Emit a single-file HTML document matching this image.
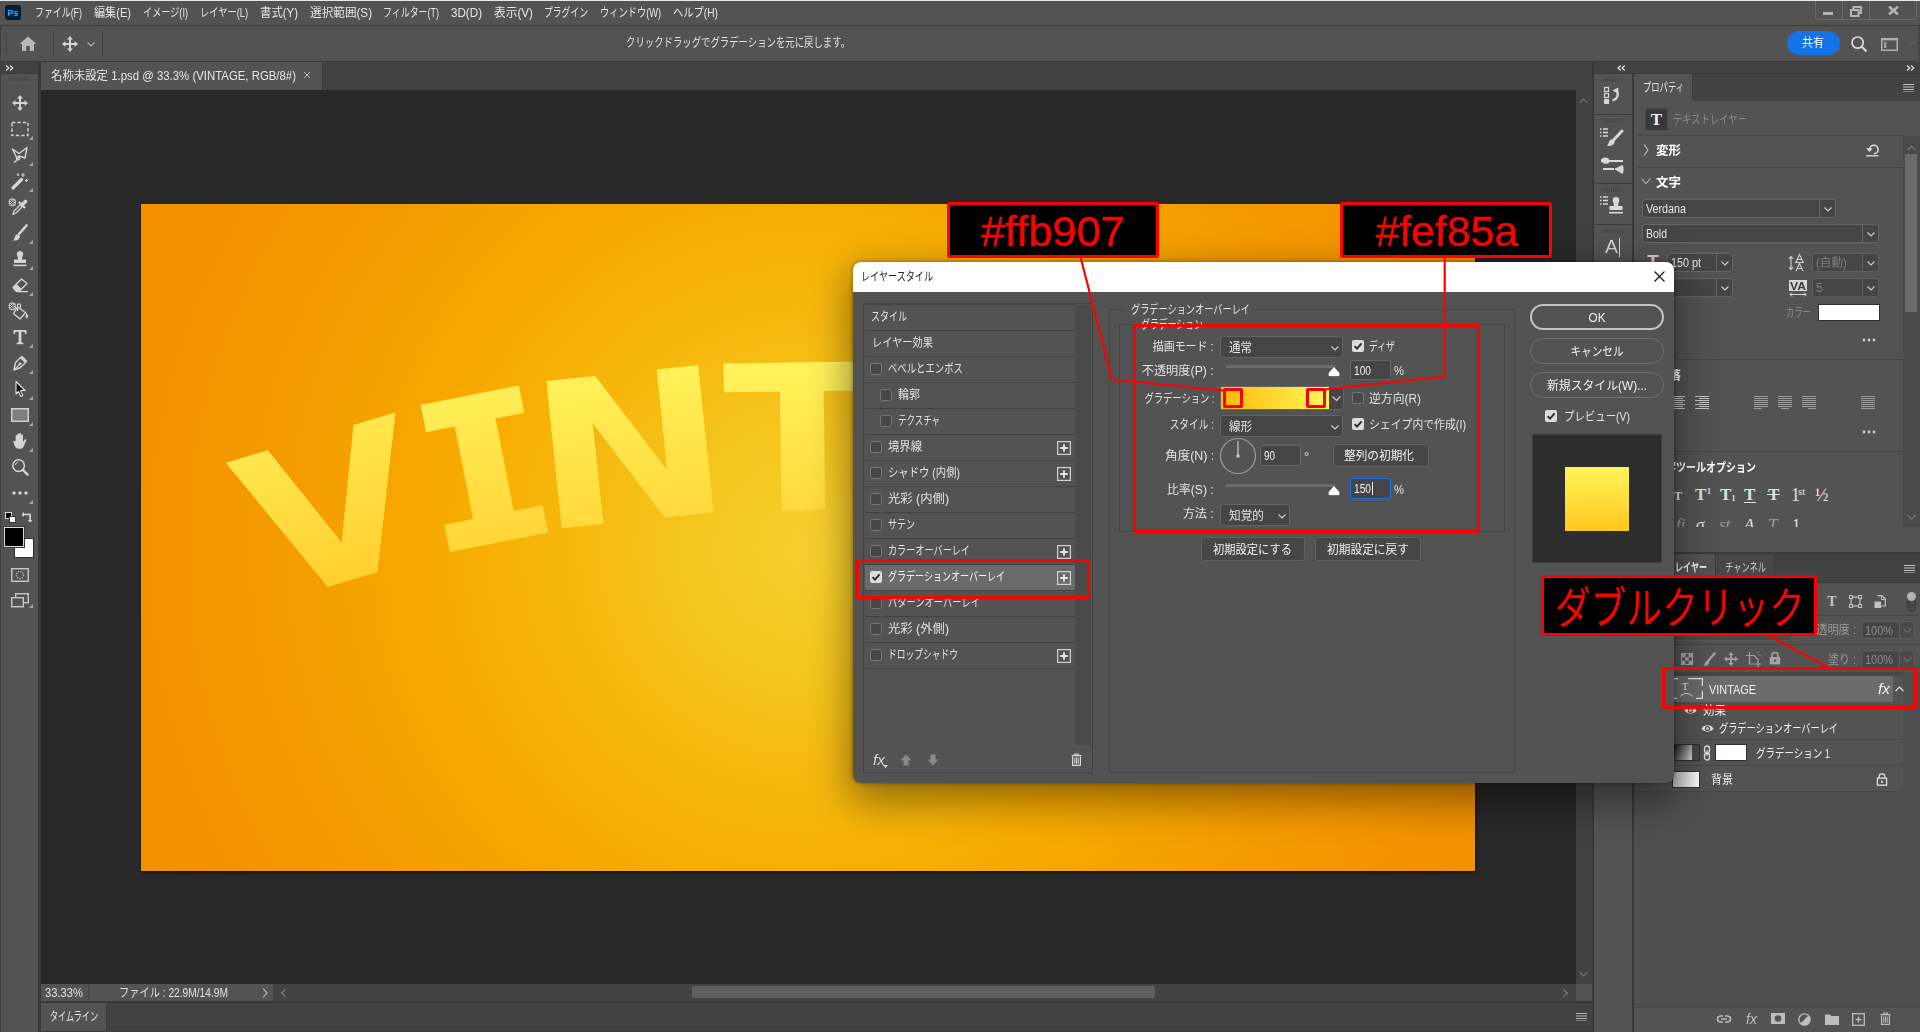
<!DOCTYPE html>
<html lang="ja"><head><meta charset="utf-8"><title>Photoshop</title>
<style>
html,body{margin:0;padding:0;}
body{width:1920px;height:1032px;overflow:hidden;background:#535353;position:relative;font-family:"Liberation Sans","Noto Sans CJK JP",sans-serif;font-size:12px;color:#ddd;}
.b{position:absolute;box-sizing:border-box;display:block;}
.t{position:absolute;white-space:nowrap;display:block;}
.t i{font-style:normal;}
</style></head>
<body>
<div class="b" style="left:0px;top:0px;width:1920px;height:26px;background:#535353;"></div>
<div class="b" style="left:0px;top:0px;width:1920px;height:1px;background:#e8e8e8;"></div>
<div class="b" style="left:0px;top:25px;width:1920px;height:1px;background:#3a3a3a;"></div>
<div class="b" style="left:5px;top:5px;width:16px;height:15px;background:#001e36;border-radius:3px;"></div>
<span class="t" id="t1" style="top:0.5px;height:24px;line-height:24px;font-size:9px;color:#31a8ff;font-weight:700;left:7.5px;transform-origin:0 50%;">Ps</span>
<span class="t" id="t2" style="top:0.5px;height:24px;line-height:24px;font-size:12px;color:#e6e6e6;left:35px;transform-origin:0 50%;transform:scaleX(0.7422);">ファイル(F)</span>
<span class="t" id="t3" style="top:0.5px;height:24px;line-height:24px;font-size:12px;color:#e6e6e6;left:94px;transform-origin:0 50%;transform:scaleX(0.9250);">編集(E)</span>
<span class="t" id="t4" style="top:0.5px;height:24px;line-height:24px;font-size:12px;color:#e6e6e6;left:143px;transform-origin:0 50%;transform:scaleX(0.7615);">イメージ(I)</span>
<span class="t" id="t5" style="top:0.5px;height:24px;line-height:24px;font-size:12px;color:#e6e6e6;left:200px;transform-origin:0 50%;transform:scaleX(0.7703);">レイヤー(L)</span>
<span class="t" id="t6" style="top:0.5px;height:24px;line-height:24px;font-size:12px;color:#e6e6e6;left:260px;transform-origin:0 50%;transform:scaleX(0.9500);">書式(Y)</span>
<span class="t" id="t7" style="top:0.5px;height:24px;line-height:24px;font-size:12px;color:#e6e6e6;left:310px;transform-origin:0 50%;transform:scaleX(0.9688);">選択範囲(S)</span>
<span class="t" id="t8" style="top:0.5px;height:24px;line-height:24px;font-size:12px;color:#e6e6e6;left:383px;transform-origin:0 50%;transform:scaleX(0.7457);">フィルター(T)</span>
<span class="t" id="t9" style="top:0.5px;height:24px;line-height:24px;font-size:12px;color:#e6e6e6;left:451px;transform-origin:0 50%;transform:scaleX(0.9688);">3D(D)</span>
<span class="t" id="t10" style="top:0.5px;height:24px;line-height:24px;font-size:12px;color:#e6e6e6;left:494px;transform-origin:0 50%;transform:scaleX(0.9750);">表示(V)</span>
<span class="t" id="t11" style="top:0.5px;height:24px;line-height:24px;font-size:12px;color:#e6e6e6;left:544px;transform-origin:0 50%;transform:scaleX(0.7331);">プラグイン</span>
<span class="t" id="t12" style="top:0.5px;height:24px;line-height:24px;font-size:12px;color:#e6e6e6;left:600px;transform-origin:0 50%;transform:scaleX(0.7690);">ウィンドウ(W)</span>
<span class="t" id="t13" style="top:0.5px;height:24px;line-height:24px;font-size:12px;color:#e6e6e6;left:673px;transform-origin:0 50%;transform:scaleX(0.8543);">ヘルプ(H)</span>
<div class="b" style="left:1815px;top:1px;width:102px;height:19px;border:1px solid #6a6a6a;border-top:none;border-radius:0 0 4px 4px;"></div>
<div class="b" style="left:1842px;top:1px;width:1px;height:18px;background:#6a6a6a;"></div>
<div class="b" style="left:1869px;top:1px;width:1px;height:18px;background:#6a6a6a;"></div>
<div class="b" style="left:1823px;top:12px;width:10px;height:3px;background:#b4b4b4;"></div>
<svg class="b" style="left:1850px;top:6px;" width="12" height="11" viewBox="0 0 12 11"><rect x="3.5" y="1" width="7.5" height="6" fill="none" stroke="#b4b4b4" stroke-width="2"/><rect x="1" y="4" width="7.5" height="6" fill="#535353" stroke="#b4b4b4" stroke-width="2"/></svg>
<svg class="b" style="left:1888px;top:6px;" width="11" height="9" viewBox="0 0 11 9"><path d="M1 0.5 L10 8.5 M10 0.5 L1 8.5" stroke="#b4b4b4" stroke-width="2.6"/></svg>
<div class="b" style="left:0px;top:26px;width:1920px;height:36px;background:#535353;"></div>
<div class="b" style="left:0px;top:61px;width:1920px;height:1px;background:#3a3a3a;"></div>
<div class="b" style="left:0px;top:26px;width:1px;height:36px;background:#3f3f3f;"></div>
<div class="b" style="left:1918px;top:26px;width:2px;height:36px;background:#464646;"></div>
<div class="b" style="left:5px;top:34px;width:2px;height:19px;background:repeating-linear-gradient(#454545 0 1px,#535353 1px 2px);"></div>
<svg class="b" style="left:19px;top:36px;" width="18" height="16" viewBox="0 0 18 16"><path d="M9 0.5 L0.5 8 H3 V15 H7.2 V10 H10.8 V15 H15 V8 H17.5 Z" fill="#b9b9b9"/></svg>
<div class="b" style="left:53px;top:31px;width:1px;height:25px;background:#424242;"></div>
<div class="b" style="left:102px;top:31px;width:1px;height:25px;background:#424242;"></div>
<svg class="b" style="left:62px;top:36px;" width="16" height="16" viewBox="0 0 16 16"><path d="M8 0 L11 3.4 H9 V7 H12.6 V5 L16 8 L12.6 11 V9 H9 V12.6 H11 L8 16 L5 12.6 H7 V9 H3.4 V11 L0 8 L3.4 5 V7 H7 V3.4 H5 Z" fill="#d6d6d6"/></svg>
<svg class="b" style="left:87px;top:42px;" width="8" height="5" viewBox="0 0 8 5"><path d="M0.5 0.5 L4 4 L7.5 0.5" fill="none" stroke="#b0b0b0" stroke-width="1.2"/></svg>
<span class="t" id="t14" style="top:31px;height:24px;line-height:24px;font-size:12px;color:#e0e0e0;left:626px;transform-origin:0 50%;transform:scaleX(0.7817);">クリックドラッグでグラデーションを元に戻します。</span>
<div class="b" style="left:1787px;top:31px;width:53px;height:24px;background:#1473e6;border-radius:12px;"></div>
<span class="t" id="t15" style="top:31px;height:24px;line-height:24px;font-size:12px;color:#ffffff;left:1802px;transform-origin:0 50%;transform:scaleX(0.9161);">共有</span>
<svg class="b" style="left:1850px;top:35px;" width="18" height="18" viewBox="0 0 18 18"><circle cx="7.6" cy="7.6" r="5.6" fill="none" stroke="#dcdcdc" stroke-width="1.7"/><path d="M11.8 11.8 L16.5 16.5" stroke="#dcdcdc" stroke-width="2.2"/></svg>
<svg class="b" style="left:1881px;top:38px;" width="17" height="13" viewBox="0 0 17 13"><rect x="0.75" y="0.75" width="15.5" height="11.5" fill="none" stroke="#b0b0b0" stroke-width="1.5"/><rect x="0.75" y="0.75" width="15.5" height="1.6" fill="#b0b0b0"/><rect x="3" y="4" width="2.4" height="6" fill="#a0a0a0"/></svg>
<svg class="b" style="left:1906px;top:41px;" width="9" height="5" viewBox="0 0 9 5"><path d="M0.5 0.5 L4.5 4 L8.5 0.5" fill="none" stroke="#626262" stroke-width="1.2"/></svg>
<div class="b" style="left:0px;top:62px;width:38px;height:970px;background:#535353;"></div>
<div class="b" style="left:0px;top:62px;width:38px;height:12px;background:#424242;"></div>
<div class="b" style="left:0px;top:73px;width:38px;height:1px;background:#3a3a3a;"></div>
<div class="b" style="left:38px;top:62px;width:3px;height:970px;background:#383838;"></div>
<div class="b" style="left:0px;top:62px;width:1px;height:970px;background:#3f3f3f;"></div>
<svg class="b" style="left:5px;top:65px;" width="9" height="6" viewBox="0 0 9 6"><path d="M1 0.5 L3.8 3 L1 5.5 M5 0.5 L7.8 3 L5 5.5" fill="none" stroke="#e0e0e0" stroke-width="1.2"/></svg>
<div class="b" style="left:10px;top:77px;width:19px;height:4px;background:repeating-linear-gradient(90deg,#464646 0 1px,#535353 1px 2px);"></div>
<svg class="b" style="left:10px;top:93px;overflow:visible;" width="20" height="20" viewBox="0 0 20 20"><g transform="translate(2,2)"><path d="M8 0 L11 3.4 H9 V7 H12.6 V5 L16 8 L12.6 11 V9 H9 V12.6 H11 L8 16 L5 12.6 H7 V9 H3.4 V11 L0 8 L3.4 5 V7 H7 V3.4 H5 Z" fill="#d4d4d4"/></g></svg>
<svg class="b" style="left:10px;top:119px;overflow:visible;" width="20" height="20" viewBox="0 0 20 20"><rect x="2" y="3.5" width="16" height="13" fill="none" stroke="#d4d4d4" stroke-width="1.4" stroke-dasharray="3.4 2"/></svg>
<svg class="b" style="left:29px;top:136px;" width="4" height="4" viewBox="0 0 4 4"><path d="M4 0 V4 H0 Z" fill="#a8a8a8"/></svg>
<svg class="b" style="left:10px;top:145px;overflow:visible;" width="20" height="20" viewBox="0 0 20 20"><path d="M2.5 4 L9 8.5 L17 2.5 L15 13 L9.5 11 L7.5 14.5 Z" fill="none" stroke="#d4d4d4" stroke-width="1.4" stroke-linejoin="round"/><path d="M7.5 14.5 L4 17.5" stroke="#d4d4d4" stroke-width="1.4"/><circle cx="8.2" cy="13.2" r="1.8" fill="none" stroke="#d4d4d4" stroke-width="1.1"/></svg>
<svg class="b" style="left:29px;top:162px;" width="4" height="4" viewBox="0 0 4 4"><path d="M4 0 V4 H0 Z" fill="#a8a8a8"/></svg>
<svg class="b" style="left:10px;top:171px;overflow:visible;" width="20" height="20" viewBox="0 0 20 20"><path d="M3 17 L11.5 8.5" stroke="#d4d4d4" stroke-width="3.2" stroke-linecap="round"/><path d="M13 2 V6 M11 4 H15 M16.5 8 V11 M15 9.5 H18 M8 2.5 V5 M6.8 3.7 H9.2" stroke="#d4d4d4" stroke-width="1.1"/></svg>
<svg class="b" style="left:29px;top:188px;" width="4" height="4" viewBox="0 0 4 4"><path d="M4 0 V4 H0 Z" fill="#a8a8a8"/></svg>
<svg class="b" style="left:10px;top:197px;overflow:visible;" width="20" height="20" viewBox="0 0 20 20"><path d="M3 17.5 L4 14 L10.5 7.5 L12.5 9.5 L6 16 Z" fill="none" stroke="#d4d4d4" stroke-width="1.3" stroke-linejoin="round"/><path d="M9.5 5.5 L14.5 10.5" stroke="#d4d4d4" stroke-width="2.2" stroke-linecap="round"/><path d="M12 8 L15.5 4.5" stroke="#d4d4d4" stroke-width="3.6" stroke-linecap="round"/><g transform="translate(-1.2,1.6)"><rect x="0" y="0" width="7" height="7.6" rx="2.6" fill="#d4d4d4"/><g fill="#3c3c3c"><rect x="1" y="1" width="1.2" height="1.2"/><rect x="3.4" y="1" width="1.2" height="1.2"/><rect x="2.2" y="2.2" width="1.2" height="1.2"/><rect x="4.6" y="2.2" width="1.2" height="1.2"/><rect x="1" y="3.4" width="1.2" height="1.2"/><rect x="3.4" y="3.4" width="1.2" height="1.2"/><rect x="2.2" y="4.6" width="1.2" height="1.2"/><rect x="4.6" y="4.6" width="1.2" height="1.2"/><rect x="1" y="5.8" width="1.2" height="1"/><rect x="3.4" y="5.8" width="1.2" height="1"/></g></g></svg>
<svg class="b" style="left:10px;top:223px;overflow:visible;" width="20" height="20" viewBox="0 0 20 20"><path d="M16.5 2.5 L9 11" stroke="#d4d4d4" stroke-width="2.6" stroke-linecap="round"/><path d="M7.8 11.2 C5.5 11.2 4.8 13.5 4.6 15 C4.4 16.3 3.4 17 2.5 17.2 C5.5 18.3 9.6 17 10 13.4 Z" fill="#d4d4d4"/></svg>
<svg class="b" style="left:29px;top:240px;" width="4" height="4" viewBox="0 0 4 4"><path d="M4 0 V4 H0 Z" fill="#a8a8a8"/></svg>
<svg class="b" style="left:10px;top:249px;overflow:visible;" width="20" height="20" viewBox="0 0 20 20"><path d="M10 2 C12.2 2 13.4 3.6 13.2 5.4 C13 7 12 8 12 9.5 V10.5 H16 V14 H4 V10.5 H8 V9.5 C8 8 7 7 6.8 5.4 C6.6 3.6 7.8 2 10 2 Z" fill="#d4d4d4"/><rect x="3.5" y="15.6" width="13" height="1.6" fill="#d4d4d4"/></svg>
<svg class="b" style="left:29px;top:266px;" width="4" height="4" viewBox="0 0 4 4"><path d="M4 0 V4 H0 Z" fill="#a8a8a8"/></svg>
<svg class="b" style="left:10px;top:275px;overflow:visible;" width="20" height="20" viewBox="0 0 20 20"><path d="M3 12.5 L11.5 4 L17 8.5 L9 16.5 H6.5 Z" fill="none" stroke="#d4d4d4" stroke-width="1.4" stroke-linejoin="round"/><path d="M3 12.5 L6.5 16.5 H9 L11.5 14 L6.5 9 Z" fill="#d4d4d4"/><path d="M9 16.6 H18" stroke="#d4d4d4" stroke-width="1.3"/></svg>
<svg class="b" style="left:29px;top:292px;" width="4" height="4" viewBox="0 0 4 4"><path d="M4 0 V4 H0 Z" fill="#a8a8a8"/></svg>
<svg class="b" style="left:10px;top:301px;overflow:visible;" width="20" height="20" viewBox="0 0 20 20"><path d="M7.5 6 L15.5 11.5 L10 18 L3.5 12.5 Z" fill="none" stroke="#d4d4d4" stroke-width="1.4" stroke-linejoin="round"/><path d="M7.5 10 V4 C7.5 2.4 10.5 2.4 10.5 4 V7.5" fill="none" stroke="#d4d4d4" stroke-width="1.2"/><path d="M16 11.5 C17.8 13.5 18.2 15 17.8 16.6 C17.3 18 15.6 17.6 15.6 16 Z" fill="#d4d4d4"/><g transform="translate(-1.2,1.6)"><rect x="0" y="0" width="7" height="7.6" rx="2.6" fill="#d4d4d4"/><g fill="#3c3c3c"><rect x="1" y="1" width="1.2" height="1.2"/><rect x="3.4" y="1" width="1.2" height="1.2"/><rect x="2.2" y="2.2" width="1.2" height="1.2"/><rect x="4.6" y="2.2" width="1.2" height="1.2"/><rect x="1" y="3.4" width="1.2" height="1.2"/><rect x="3.4" y="3.4" width="1.2" height="1.2"/><rect x="2.2" y="4.6" width="1.2" height="1.2"/><rect x="4.6" y="4.6" width="1.2" height="1.2"/><rect x="1" y="5.8" width="1.2" height="1"/><rect x="3.4" y="5.8" width="1.2" height="1"/></g></g></svg>
<svg class="b" style="left:10px;top:327px;overflow:visible;" width="20" height="20" viewBox="0 0 20 20"><path d="M3.5 3 H16.5 V7 H15.2 C15 5.4 14.4 4.8 13 4.8 H11.4 V14.6 C11.4 15.6 11.9 15.9 13.4 16 V17.2 H6.6 V16 C8.1 15.9 8.6 15.6 8.6 14.6 V4.8 H7 C5.6 4.8 5 5.4 4.8 7 H3.5 Z" fill="#d4d4d4"/></svg>
<svg class="b" style="left:29px;top:344px;" width="4" height="4" viewBox="0 0 4 4"><path d="M4 0 V4 H0 Z" fill="#a8a8a8"/></svg>
<svg class="b" style="left:10px;top:353px;overflow:visible;" width="20" height="20" viewBox="0 0 20 20"><path d="M4 17 L5.5 9.5 L10.5 4.5 L15.5 9.5 L10.5 14.5 Z" fill="none" stroke="#d4d4d4" stroke-width="1.4" stroke-linejoin="round"/><path d="M4 17 L9.5 11.5" stroke="#d4d4d4" stroke-width="1.1"/><circle cx="10" cy="10.8" r="1.4" fill="#d4d4d4"/><path d="M11 3.5 L16.5 9" stroke="#d4d4d4" stroke-width="2.6"/></svg>
<svg class="b" style="left:29px;top:370px;" width="4" height="4" viewBox="0 0 4 4"><path d="M4 0 V4 H0 Z" fill="#a8a8a8"/></svg>
<svg class="b" style="left:10px;top:379px;overflow:visible;" width="20" height="20" viewBox="0 0 20 20"><path d="M6 2.5 L15 11.5 H10.5 L12.8 16.5 L10.8 17.4 L8.5 12.4 L6 15 Z" fill="#0a0a0a" stroke="#e6e6e6" stroke-width="1.1" stroke-linejoin="round"/></svg>
<svg class="b" style="left:29px;top:396px;" width="4" height="4" viewBox="0 0 4 4"><path d="M4 0 V4 H0 Z" fill="#a8a8a8"/></svg>
<svg class="b" style="left:10px;top:405px;overflow:visible;" width="20" height="20" viewBox="0 0 20 20"><rect x="1.7" y="3.7" width="16.6" height="12.6" fill="#808080" stroke="#d4d4d4" stroke-width="1.4"/></svg>
<svg class="b" style="left:29px;top:422px;" width="4" height="4" viewBox="0 0 4 4"><path d="M4 0 V4 H0 Z" fill="#a8a8a8"/></svg>
<svg class="b" style="left:10px;top:431px;overflow:visible;" width="20" height="20" viewBox="0 0 20 20"><path d="M5.6 10.5 V5 C5.6 3.8 7.4 3.8 7.4 5 V9 V3.4 C7.4 2.2 9.3 2.2 9.3 3.4 V9 V3 C9.3 1.8 11.2 1.8 11.2 3 V9 V4.4 C11.2 3.2 13 3.2 13 4.4 V11 L14.6 8.6 C15.4 7.6 16.9 8.4 16.3 9.6 L13.6 15.4 C12.9 17 11.8 17.8 10 17.8 H8.8 C6.4 17.8 5.2 16.6 4.6 14.6 L3.4 11 C3 9.8 4.6 9.2 5.2 10.3 Z" fill="#d4d4d4"/></svg>
<svg class="b" style="left:29px;top:448px;" width="4" height="4" viewBox="0 0 4 4"><path d="M4 0 V4 H0 Z" fill="#a8a8a8"/></svg>
<svg class="b" style="left:10px;top:457px;overflow:visible;" width="20" height="20" viewBox="0 0 20 20"><circle cx="8.6" cy="8.6" r="5.8" fill="none" stroke="#d4d4d4" stroke-width="1.5"/><path d="M12.8 12.8 L17.6 17.6" stroke="#d4d4d4" stroke-width="2.4" stroke-linecap="round"/><path d="M5.4 8 C5.6 6.4 6.6 5.5 8 5.3" fill="none" stroke="#d4d4d4" stroke-width="1"/></svg>
<svg class="b" style="left:10px;top:483px;overflow:visible;" width="20" height="20" viewBox="0 0 20 20"><circle cx="4" cy="10" r="1.7" fill="#d4d4d4"/><circle cx="10" cy="10" r="1.7" fill="#d4d4d4"/><circle cx="16" cy="10" r="1.7" fill="#d4d4d4"/></svg>
<svg class="b" style="left:29px;top:500px;" width="4" height="4" viewBox="0 0 4 4"><path d="M4 0 V4 H0 Z" fill="#a8a8a8"/></svg>
<div class="b" style="left:5px;top:512px;width:7px;height:7px;background:#000;border:1px solid #d8d8d8;"></div>
<div class="b" style="left:9px;top:516px;width:7px;height:7px;background:#fff;border:1px solid #3a3a3a;"></div>
<svg class="b" style="left:21px;top:511px;" width="13" height="12" viewBox="0 0 13 12"><path d="M3 1 L0.5 3.5 L3 6 V4.3 H8.3 V9 H6.6 L9.1 11.5 L11.6 9 H9.9 V2.7 H3 Z" fill="#d8d8d8"/></svg>
<div class="b" style="left:14px;top:538px;width:20px;height:20px;background:#fff;border:1px solid #2c2c2c;"></div>
<div class="b" style="left:4px;top:527px;width:20px;height:20px;background:#000;border:1px solid #dcdcdc;box-shadow:0 0 0 1px #3a3a3a;"></div>
<svg class="b" style="left:11px;top:568px;" width="18" height="14" viewBox="0 0 18 14"><rect x="0.7" y="0.7" width="16.6" height="12.6" fill="none" stroke="#c8c8c8" stroke-width="1.4"/><circle cx="9" cy="7" r="3.6" fill="none" stroke="#c8c8c8" stroke-width="1.2" stroke-dasharray="1.2 1.2"/></svg>
<svg class="b" style="left:11px;top:593px;" width="18" height="15" viewBox="0 0 18 15"><rect x="4.7" y="0.7" width="12.6" height="9" fill="none" stroke="#c8c8c8" stroke-width="1.4"/><rect x="0.7" y="4.7" width="11.6" height="9" fill="#535353" stroke="#c8c8c8" stroke-width="1.4"/></svg>
<svg class="b" style="left:29px;top:604px;" width="4" height="4" viewBox="0 0 4 4"><path d="M4 0 V4 H0 Z" fill="#a8a8a8"/></svg>
<div class="b" style="left:41px;top:62px;width:1551px;height:28px;background:#424242;"></div>
<div class="b" style="left:41px;top:62px;width:281px;height:28px;background:#535353;"></div>
<div class="b" style="left:322px;top:62px;width:1px;height:28px;background:#3a3a3a;"></div>
<span class="t" id="t16" style="top:63.5px;height:24px;line-height:24px;font-size:12px;color:#e6e6e6;left:51px;transform-origin:0 50%;transform:scaleX(0.9495);">名称未設定 1.psd @ 33.3% (VINTAGE, RGB/8#)</span>
<svg class="b" style="left:303px;top:71px;" width="8" height="8" viewBox="0 0 8 8"><path d="M1 1 L7 7 M7 1 L1 7" stroke="#b8b8b8" stroke-width="1"/></svg>
<div class="b" style="left:41px;top:90px;width:1535px;height:894px;background:#282828;"></div>
<div class="b" style="left:1576px;top:90px;width:16px;height:894px;background:#424242;"></div>
<svg class="b" style="left:1579px;top:98px;" width="9" height="6" viewBox="0 0 9 6"><path d="M0.5 5 L4.5 1 L8.5 5" fill="none" stroke="#707070" stroke-width="1.2"/></svg>
<svg class="b" style="left:1579px;top:971px;" width="9" height="6" viewBox="0 0 9 6"><path d="M0.5 1 L4.5 5 L8.5 1" fill="none" stroke="#707070" stroke-width="1.2"/></svg>
<div class="b" style="left:1592px;top:62px;width:2px;height:970px;background:#383838;"></div>
<div class="b" style="left:141px;top:204px;width:1334px;height:667px;background:radial-gradient(circle 760px at 666px 345px, #f5d030 0%, #f5c821 13%, #f6bc12 27%, #f7ad02 44%, #f59d00 66%, #f39200 88%, #f29000 100%);box-shadow:1px 2px 3px rgba(0,0,0,.55);"></div>
<div class="b" style="left:41px;top:984px;width:1551px;height:17px;background:#424242;"></div>
<div class="b" style="left:41px;top:984px;width:48px;height:17px;background:#535353;"></div>
<span class="t" id="t17" style="top:980.5px;height:24px;line-height:24px;font-size:12px;color:#e0e0e0;left:45px;transform-origin:0 50%;transform:scaleX(0.9336);">33.33%</span>
<div class="b" style="left:89px;top:984px;width:184px;height:17px;background:#535353;"></div>
<div class="b" style="left:88px;top:984px;width:1px;height:17px;background:#444;"></div>
<span class="t" id="t18" style="top:980.5px;height:24px;line-height:24px;font-size:12px;color:#e0e0e0;left:119px;transform-origin:0 50%;transform:scaleX(0.8513);">ファイル : 22.9M/14.9M</span>
<svg class="b" style="left:262px;top:988px;" width="6" height="10" viewBox="0 0 6 10"><path d="M1 0.5 L5 5 L1 9.5" fill="none" stroke="#c8c8c8" stroke-width="1.1"/></svg>
<svg class="b" style="left:281px;top:989px;" width="5" height="8" viewBox="0 0 5 8"><path d="M4.5 0.5 L0.5 4 L4.5 7.5" fill="none" stroke="#808080" stroke-width="1.1"/></svg>
<svg class="b" style="left:1563px;top:989px;" width="5" height="8" viewBox="0 0 5 8"><path d="M0.5 0.5 L4.5 4 L0.5 7.5" fill="none" stroke="#808080" stroke-width="1.1"/></svg>
<div class="b" style="left:692px;top:986px;width:463px;height:12px;background:#5e5e5e;border-radius:1px;"></div>
<div class="b" style="left:1576px;top:984px;width:16px;height:17px;background:#535353;"></div>
<div class="b" style="left:41px;top:1001px;width:1551px;height:2px;background:#383838;"></div>
<div class="b" style="left:41px;top:1003px;width:1551px;height:29px;background:#424242;"></div>
<div class="b" style="left:41px;top:1003px;width:65px;height:28px;background:#535353;"></div>
<div class="b" style="left:106px;top:1003px;width:1px;height:28px;background:#3a3a3a;"></div>
<div class="b" style="left:41px;top:1031px;width:1551px;height:1px;background:#3a3a3a;"></div>
<span class="t" id="t19" style="top:1004.5px;height:24px;line-height:24px;font-size:12px;color:#e6e6e6;left:50px;transform-origin:0 50%;transform:scaleX(0.6744);">タイムライン</span>
<svg class="b" style="left:1576px;top:1013px;" width="11" height="8" viewBox="0 0 11 8"><path d="M0 0.5 H11 M0 3 H11 M0 5.5 H11 M0 8 H11" stroke="#b4b4b4" stroke-width="1"/></svg>
<svg class="b" style="left:141px;top:204px;overflow:hidden;" width="1334" height="667" viewBox="141 204 1334 667"><defs><linearGradient id="lg0" gradientUnits="userSpaceOnUse" x1="0" y1="-74.0" x2="0" y2="74.0"><stop offset="0" stop-color="#ffe74d"/><stop offset="1" stop-color="#ffcf2e"/></linearGradient><linearGradient id="lg1" gradientUnits="userSpaceOnUse" x1="0" y1="-74.0" x2="0" y2="74.0"><stop offset="0" stop-color="#ffed56"/><stop offset="1" stop-color="#ffd536"/></linearGradient><linearGradient id="lg2" gradientUnits="userSpaceOnUse" x1="0" y1="-74.0" x2="0" y2="74.0"><stop offset="0" stop-color="#fff15a"/><stop offset="1" stop-color="#ffd93b"/></linearGradient><linearGradient id="lg3" gradientUnits="userSpaceOnUse" x1="0" y1="-74.0" x2="0" y2="74.0"><stop offset="0" stop-color="#fff35c"/><stop offset="1" stop-color="#ffda3d"/></linearGradient><linearGradient id="lg4" gradientUnits="userSpaceOnUse" x1="0" y1="-74.0" x2="0" y2="74.0"><stop offset="0" stop-color="#fff35c"/><stop offset="1" stop-color="#ffda3d"/></linearGradient><linearGradient id="lg5" gradientUnits="userSpaceOnUse" x1="0" y1="-74.0" x2="0" y2="74.0"><stop offset="0" stop-color="#fff059"/><stop offset="1" stop-color="#ffd83a"/></linearGradient><linearGradient id="lg6" gradientUnits="userSpaceOnUse" x1="0" y1="-74.0" x2="0" y2="74.0"><stop offset="0" stop-color="#ffeb53"/><stop offset="1" stop-color="#ffd334"/></linearGradient><filter id="fat" x="-20%" y="-5%" width="140%" height="110%"><feMorphology operator="dilate" radius="6 0.5"/></filter></defs><text transform="translate(331.5 508.7) rotate(-16.5) scale(1.14 1.0)" x="0" y="74.0" text-anchor="middle" font-family="DejaVu Sans" font-weight="bold" font-size="203" fill="url(#lg0)">V</text><text transform="translate(484.2 468.8) rotate(-11.2) scale(1.0 1.0)" x="0" y="74.0" text-anchor="middle" font-family="DejaVu Sans Mono" font-weight="bold" font-size="203" fill="url(#lg1)" filter="url(#fat)">I</text><text transform="translate(629.9 446.7) rotate(-6.0) scale(1.15 1.0)" x="0" y="74.0" text-anchor="middle" font-family="DejaVu Sans" font-weight="bold" font-size="203" fill="url(#lg2)">N</text><text transform="translate(802.5 436.5) rotate(-0.8) scale(1.14 1.0)" x="0" y="74.0" text-anchor="middle" font-family="DejaVu Sans" font-weight="bold" font-size="203" fill="url(#lg3)">T</text><text transform="translate(975 436.5) rotate(4.5) scale(1.14 1.0)" x="0" y="74.0" text-anchor="middle" font-family="DejaVu Sans" font-weight="bold" font-size="203" fill="url(#lg4)">A</text><text transform="translate(1150 452) rotate(10) scale(1.14 1.0)" x="0" y="74.0" text-anchor="middle" font-family="DejaVu Sans" font-weight="bold" font-size="203" fill="url(#lg5)">G</text><text transform="translate(1310 482) rotate(15.5) scale(1.14 1.0)" x="0" y="74.0" text-anchor="middle" font-family="DejaVu Sans" font-weight="bold" font-size="203" fill="url(#lg6)">E</text></svg>
<div class="b" style="left:1594px;top:62px;width:326px;height:12px;background:#424242;"></div>
<div class="b" style="left:1594px;top:73px;width:326px;height:1px;background:#3a3a3a;"></div>
<svg class="b" style="left:1617px;top:65px;" width="9" height="6" viewBox="0 0 9 6"><path d="M3.8 0.5 L1 3 L3.8 5.5 M7.8 0.5 L5 3 L7.8 5.5" fill="none" stroke="#e0e0e0" stroke-width="1.2"/></svg>
<svg class="b" style="left:1906px;top:65px;" width="9" height="6" viewBox="0 0 9 6"><path d="M1 0.5 L3.8 3 L1 5.5 M5 0.5 L7.8 3 L5 5.5" fill="none" stroke="#e0e0e0" stroke-width="1.2"/></svg>
<div class="b" style="left:1594px;top:74px;width:38px;height:958px;background:#535353;"></div>
<div class="b" style="left:1632px;top:74px;width:2px;height:958px;background:#383838;"></div>
<div class="b" style="left:1594px;top:114px;width:38px;height:1px;background:#3a3a3a;"></div>
<div class="b" style="left:1594px;top:183px;width:38px;height:1px;background:#3a3a3a;"></div>
<div class="b" style="left:1594px;top:224px;width:38px;height:1px;background:#3a3a3a;"></div>
<div class="b" style="left:1594px;top:266px;width:38px;height:1px;background:#3a3a3a;"></div>
<div class="b" style="left:1603px;top:78px;width:19px;height:4px;background:repeating-linear-gradient(90deg,#464646 0 1px,#535353 1px 2px);"></div>
<div class="b" style="left:1603px;top:119px;width:19px;height:4px;background:repeating-linear-gradient(90deg,#464646 0 1px,#535353 1px 2px);"></div>
<div class="b" style="left:1603px;top:188px;width:19px;height:4px;background:repeating-linear-gradient(90deg,#464646 0 1px,#535353 1px 2px);"></div>
<div class="b" style="left:1603px;top:229px;width:19px;height:4px;background:repeating-linear-gradient(90deg,#464646 0 1px,#535353 1px 2px);"></div>
<svg class="b" style="left:1602px;top:86px;" width="22" height="20" viewBox="0 0 22 20"><rect x="2.5" y="1.5" width="4" height="4" fill="none" stroke="#d8d8d8" stroke-width="1.2"/><rect x="2.5" y="7.5" width="4" height="4" fill="none" stroke="#d8d8d8" stroke-width="1.2"/><rect x="2" y="13" width="5" height="5" fill="#d8d8d8"/><path d="M10.5 14.5 C15 13.5 17.5 9 14.5 3.5" fill="none" stroke="#d8d8d8" stroke-width="2.2"/><path d="M10.5 4.5 L16.5 1.5 L16 7.5 Z" fill="#d8d8d8"/></svg>
<svg class="b" style="left:1600px;top:126px;" width="24" height="22" viewBox="0 0 24 22"><path d="M0 3 H1.5 M3 3 H8 M0 6.5 H1.5 M3 6.5 H8 M0 10 H1.5 M3 10 H8" stroke="#d8d8d8" stroke-width="1.4"/><path d="M22 5 L14 13.5" stroke="#d8d8d8" stroke-width="3" stroke-linecap="round"/><path d="M12.6 13.2 C10 13.2 9 15.4 8.6 17 C8.3 18.4 7.4 19.2 6.4 19.5 C9.6 20.8 14.4 19.2 14.8 15.4 Z" fill="#d8d8d8"/></svg>
<svg class="b" style="left:1600px;top:156px;" width="24" height="20" viewBox="0 0 24 20"><path d="M1 3.5 C4 0.5 8.5 1 9.5 4 H23 V6 H9.5 C8.5 8.5 4 8.5 1 5.5 Z" fill="#d8d8d8"/><path d="M3 12 H14 V14 H3 Z" fill="#d8d8d8"/><path d="M22.5 9 L14 13 L22.5 18 C24 15.5 24 11.5 22.5 9 Z" fill="#d8d8d8"/></svg>
<svg class="b" style="left:1600px;top:195px;" width="24" height="22" viewBox="0 0 24 22"><path d="M0 2 H1.5 M3 2 H8 M0 5.5 H1.5 M3 5.5 H8 M0 9 H1.5 M3 9 H8" stroke="#d8d8d8" stroke-width="1.4"/><path d="M16 2 C18.4 2 19.6 3.8 19.4 5.6 C19.2 7.2 18.2 8.2 18.2 9.8 V11 H22.5 V15 H9.5 V11 H13.8 V9.8 C13.8 8.2 12.8 7.2 12.6 5.6 C12.4 3.8 13.6 2 16 2 Z" fill="#d8d8d8"/><rect x="9" y="16.8" width="14" height="1.7" fill="#d8d8d8"/></svg>
<span class="t" id="t20" style="top:235px;height:24px;line-height:24px;font-size:19px;color:#d8d8d8;left:1605px;transform-origin:0 50%;transform:scaleX(1.0246);">A</span>
<div class="b" style="left:1619px;top:238px;width:1px;height:19px;background:#d8d8d8;"></div>
<div class="b" style="left:1634px;top:74px;width:286px;height:28px;background:#424242;"></div>
<div class="b" style="left:1634px;top:74px;width:58px;height:28px;background:#535353;"></div>
<div class="b" style="left:1692px;top:74px;width:1px;height:27px;background:#3a3a3a;"></div>
<span class="t" id="t21" style="top:75.5px;height:24px;line-height:24px;font-size:12px;color:#e6e6e6;left:1643px;transform-origin:0 50%;transform:scaleX(0.6916);">プロパティ</span>
<svg class="b" style="left:1903px;top:84px;" width="11" height="8" viewBox="0 0 11 8"><path d="M0 0.5 H11 M0 3 H11 M0 5.5 H11 M0 8 H11" stroke="#c0c0c0" stroke-width="1"/></svg>
<div class="b" style="left:1634px;top:101px;width:286px;height:452px;background:#535353;"></div>
<div class="b" style="left:1645px;top:108px;width:23px;height:23px;background:#383838;border-radius:3px;border:1px solid #4a4a4a;"></div>
<span class="t" id="t22" style="top:107.5px;height:24px;line-height:24px;font-size:17px;color:#f0f0f0;font-weight:700;left:1656.5px;transform-origin:50% 50%;margin-left:-300px;width:600px;text-align:center;font-family:'Liberation Serif',serif;">T</span>
<span class="t" id="t23" style="top:108px;height:24px;line-height:24px;font-size:12px;color:#8c8c8c;left:1673px;transform-origin:0 50%;transform:scaleX(0.7766);">テキストレイヤー</span>
<div class="b" style="left:1634px;top:135px;width:269px;height:1px;background:#444444;"></div>
<div class="b" style="left:1634px;top:167px;width:269px;height:1px;background:#444444;"></div>
<svg class="b" style="left:1643px;top:144px;" width="6" height="12" viewBox="0 0 6 12"><path d="M1 0.5 L5 6 L1 11.5" fill="none" stroke="#c0c0c0" stroke-width="1.1"/></svg>
<span class="t" id="t24" style="top:138.5px;height:24px;line-height:24px;font-size:12px;color:#ffffff;font-weight:700;left:1656px;transform-origin:0 50%;transform:scaleX(1.0410);">変形</span>
<svg class="b" style="left:1865px;top:142px;" width="15" height="15" viewBox="0 0 15 15"><path d="M4.5 7.5 A4.3 4.3 0 1 1 8.8 11.8" fill="none" stroke="#e0e0e0" stroke-width="1.5"/><path d="M1.2 6.2 L4.5 10 L7.6 6.2 Z" fill="#e0e0e0"/><path d="M1 13.8 H13.5" stroke="#e0e0e0" stroke-width="1.3"/></svg>
<svg class="b" style="left:1641px;top:178px;" width="10" height="7" viewBox="0 0 10 7"><path d="M0.5 0.5 L5 5.5 L9.5 0.5" fill="none" stroke="#c0c0c0" stroke-width="1.1"/></svg>
<span class="t" id="t25" style="top:170.5px;height:24px;line-height:24px;font-size:12px;color:#ffffff;font-weight:700;left:1656px;transform-origin:0 50%;transform:scaleX(1.0410);">文字</span>
<div class="b" style="left:1642px;top:199px;width:194px;height:19px;background:#454545;border:1px solid #666666;border-radius:3px;"></div>
<div class="b" style="left:1819px;top:200px;width:1px;height:17px;background:#666666;"></div>
<svg class="b" style="left:1823.5px;top:207.0px;" width="8" height="5" viewBox="0 0 8 5"><path d="M0.5 0.5 L4 4 L7.5 0.5" fill="none" stroke="#d0d0d0" stroke-width="1.1"/></svg>
<span class="t" id="t26" style="top:197px;height:24px;line-height:24px;font-size:12px;color:#e6e6e6;left:1646px;transform-origin:0 50%;transform:scaleX(0.8945);">Verdana</span>
<div class="b" style="left:1642px;top:224px;width:237px;height:19px;background:#454545;border:1px solid #666666;border-radius:3px;"></div>
<div class="b" style="left:1862px;top:225px;width:1px;height:17px;background:#666666;"></div>
<svg class="b" style="left:1866.5px;top:232.0px;" width="8" height="5" viewBox="0 0 8 5"><path d="M0.5 0.5 L4 4 L7.5 0.5" fill="none" stroke="#d0d0d0" stroke-width="1.1"/></svg>
<span class="t" id="t27" style="top:222px;height:24px;line-height:24px;font-size:12px;color:#e6e6e6;left:1646px;transform-origin:0 50%;transform:scaleX(0.8739);">Bold</span>
<span class="t" id="t28" style="top:250px;height:24px;line-height:24px;font-size:19px;color:#d0d0d0;font-weight:700;left:1647px;transform-origin:0 50%;font-family:'Liberation Sans';">T</span>
<div class="b" style="left:1667px;top:253px;width:66px;height:19px;background:#454545;border:1px solid #666666;border-radius:3px;"></div>
<div class="b" style="left:1716px;top:254px;width:1px;height:17px;background:#666666;"></div>
<svg class="b" style="left:1720.5px;top:261.0px;" width="8" height="5" viewBox="0 0 8 5"><path d="M0.5 0.5 L4 4 L7.5 0.5" fill="none" stroke="#d0d0d0" stroke-width="1.1"/></svg>
<span class="t" id="t29" style="top:251px;height:24px;line-height:24px;font-size:12px;color:#e6e6e6;left:1671px;transform-origin:0 50%;transform:scaleX(0.8989);">150 pt</span>
<svg class="b" style="left:1788px;top:253px;" width="18" height="19" viewBox="0 0 18 19"><path d="M3 4 V16 M1 6 L3 3.5 L5 6 M1 14 L3 16.5 L5 14" fill="none" stroke="#d0d0d0" stroke-width="1.1"/><path d="M8 9 L11.5 1.5 L15 9 M9.3 6.5 H13.7 M8 18 L11.5 10.5 L15 18 M9.3 15.5 H13.7 M7 9.5 H16" fill="none" stroke="#d0d0d0" stroke-width="1.1"/></svg>
<div class="b" style="left:1812px;top:253px;width:67px;height:19px;background:#454545;border:1px solid #5e5e5e;border-radius:3px;"></div>
<div class="b" style="left:1862px;top:254px;width:1px;height:17px;background:#5e5e5e;"></div>
<svg class="b" style="left:1866.5px;top:261.0px;" width="8" height="5" viewBox="0 0 8 5"><path d="M0.5 0.5 L4 4 L7.5 0.5" fill="none" stroke="#d0d0d0" stroke-width="1.1"/></svg>
<span class="t" id="t30" style="top:251px;height:24px;line-height:24px;font-size:12px;color:#7e7e7e;left:1816px;transform-origin:0 50%;transform:scaleX(0.9688);">(自動)</span>
<div class="b" style="left:1667px;top:278px;width:66px;height:19px;background:#454545;border:1px solid #666666;border-radius:3px;"></div>
<div class="b" style="left:1716px;top:279px;width:1px;height:17px;background:#666666;"></div>
<svg class="b" style="left:1720.5px;top:286.0px;" width="8" height="5" viewBox="0 0 8 5"><path d="M0.5 0.5 L4 4 L7.5 0.5" fill="none" stroke="#d0d0d0" stroke-width="1.1"/></svg>
<div class="b" style="left:1789px;top:280px;width:18px;height:11px;background:#d6d6d6;"></div>
<span class="t" id="t31" style="top:273.5px;height:24px;line-height:24px;font-size:11px;color:#3a3a3a;font-weight:700;left:1790px;transform-origin:0 50%;transform:scaleX(1.1058);">VA</span>
<svg class="b" style="left:1789px;top:292px;" width="18" height="5" viewBox="0 0 18 5"><path d="M1 2.5 H17 M3 0.5 L1 2.5 L3 4.5 M15 0.5 L17 2.5 L15 4.5" fill="none" stroke="#d6d6d6" stroke-width="1"/></svg>
<div class="b" style="left:1812px;top:278px;width:67px;height:19px;background:#454545;border:1px solid #5e5e5e;border-radius:3px;"></div>
<div class="b" style="left:1862px;top:279px;width:1px;height:17px;background:#5e5e5e;"></div>
<svg class="b" style="left:1866.5px;top:286.0px;" width="8" height="5" viewBox="0 0 8 5"><path d="M0.5 0.5 L4 4 L7.5 0.5" fill="none" stroke="#d0d0d0" stroke-width="1.1"/></svg>
<span class="t" id="t32" style="top:276px;height:24px;line-height:24px;font-size:12px;color:#7e7e7e;left:1816px;transform-origin:0 50%;">5</span>
<span class="t" id="t33" style="top:300.5px;height:24px;line-height:24px;font-size:12px;color:#8c8c8c;left:1786px;transform-origin:0 50%;transform:scaleX(0.6941);">カラー</span>
<div class="b" style="left:1818px;top:304px;width:62px;height:17px;background:#ffffff;border:1px solid #2e2e2e;"></div>
<svg class="b" style="left:1862px;top:338px;" width="14" height="4" viewBox="0 0 14 4"><circle cx="2" cy="2" r="1.4" fill="#d0d0d0"/><circle cx="7" cy="2" r="1.4" fill="#d0d0d0"/><circle cx="12" cy="2" r="1.4" fill="#d0d0d0"/></svg>
<div class="b" style="left:1634px;top:359px;width:269px;height:1px;background:#444444;"></div>
<span class="t" id="t34" style="top:363.5px;height:24px;line-height:24px;font-size:12px;color:#ffffff;font-weight:700;left:1656px;transform-origin:0 50%;transform:scaleX(1.0410);">段落</span>
<svg class="b" style="left:1646px;top:396px;" width="14" height="14" viewBox="0 0 14 14"><path d="M0 0.5 H14" stroke="#c8c8c8" stroke-width="1"/><path d="M0 2.5 H10" stroke="#c8c8c8" stroke-width="1"/><path d="M0 4.5 H14" stroke="#c8c8c8" stroke-width="1"/><path d="M0 6.5 H10" stroke="#c8c8c8" stroke-width="1"/><path d="M0 8.5 H14" stroke="#c8c8c8" stroke-width="1"/><path d="M0 10.5 H10" stroke="#c8c8c8" stroke-width="1"/><path d="M0 12.5 H14" stroke="#c8c8c8" stroke-width="1"/></svg>
<svg class="b" style="left:1671px;top:396px;" width="14" height="14" viewBox="0 0 14 14"><path d="M0.0 0.5 H14.0" stroke="#c8c8c8" stroke-width="1"/><path d="M2.0 2.5 H12.0" stroke="#c8c8c8" stroke-width="1"/><path d="M0.0 4.5 H14.0" stroke="#c8c8c8" stroke-width="1"/><path d="M2.0 6.5 H12.0" stroke="#c8c8c8" stroke-width="1"/><path d="M0.0 8.5 H14.0" stroke="#c8c8c8" stroke-width="1"/><path d="M2.0 10.5 H12.0" stroke="#c8c8c8" stroke-width="1"/><path d="M0.0 12.5 H14.0" stroke="#c8c8c8" stroke-width="1"/></svg>
<svg class="b" style="left:1695px;top:396px;" width="14" height="14" viewBox="0 0 14 14"><path d="M0 0.5 H14" stroke="#c8c8c8" stroke-width="1"/><path d="M4 2.5 H14" stroke="#c8c8c8" stroke-width="1"/><path d="M0 4.5 H14" stroke="#c8c8c8" stroke-width="1"/><path d="M4 6.5 H14" stroke="#c8c8c8" stroke-width="1"/><path d="M0 8.5 H14" stroke="#c8c8c8" stroke-width="1"/><path d="M4 10.5 H14" stroke="#c8c8c8" stroke-width="1"/><path d="M0 12.5 H14" stroke="#c8c8c8" stroke-width="1"/></svg>
<svg class="b" style="left:1754px;top:396px;" width="14" height="14" viewBox="0 0 14 14"><path d="M0 0.5 H14" stroke="#9a9a9a" stroke-width="1"/><path d="M0 2.5 H14" stroke="#9a9a9a" stroke-width="1"/><path d="M0 4.5 H14" stroke="#9a9a9a" stroke-width="1"/><path d="M0 6.5 H14" stroke="#9a9a9a" stroke-width="1"/><path d="M0 8.5 H14" stroke="#9a9a9a" stroke-width="1"/><path d="M0 10.5 H14" stroke="#9a9a9a" stroke-width="1"/><path d="M0 12.5 H8" stroke="#9a9a9a" stroke-width="1"/></svg>
<svg class="b" style="left:1778px;top:396px;" width="14" height="14" viewBox="0 0 14 14"><path d="M0.0 0.5 H14.0" stroke="#9a9a9a" stroke-width="1"/><path d="M0.0 2.5 H14.0" stroke="#9a9a9a" stroke-width="1"/><path d="M0.0 4.5 H14.0" stroke="#9a9a9a" stroke-width="1"/><path d="M0.0 6.5 H14.0" stroke="#9a9a9a" stroke-width="1"/><path d="M0.0 8.5 H14.0" stroke="#9a9a9a" stroke-width="1"/><path d="M0.0 10.5 H14.0" stroke="#9a9a9a" stroke-width="1"/><path d="M3.0 12.5 H11.0" stroke="#9a9a9a" stroke-width="1"/></svg>
<svg class="b" style="left:1802px;top:396px;" width="14" height="14" viewBox="0 0 14 14"><path d="M0 0.5 H14" stroke="#9a9a9a" stroke-width="1"/><path d="M0 2.5 H14" stroke="#9a9a9a" stroke-width="1"/><path d="M0 4.5 H14" stroke="#9a9a9a" stroke-width="1"/><path d="M0 6.5 H14" stroke="#9a9a9a" stroke-width="1"/><path d="M0 8.5 H14" stroke="#9a9a9a" stroke-width="1"/><path d="M0 10.5 H14" stroke="#9a9a9a" stroke-width="1"/><path d="M6 12.5 H14" stroke="#9a9a9a" stroke-width="1"/></svg>
<svg class="b" style="left:1861px;top:396px;" width="14" height="14" viewBox="0 0 14 14"><path d="M0 0.5 H14" stroke="#9a9a9a" stroke-width="1"/><path d="M0 2.5 H14" stroke="#9a9a9a" stroke-width="1"/><path d="M0 4.5 H14" stroke="#9a9a9a" stroke-width="1"/><path d="M0 6.5 H14" stroke="#9a9a9a" stroke-width="1"/><path d="M0 8.5 H14" stroke="#9a9a9a" stroke-width="1"/><path d="M0 10.5 H14" stroke="#9a9a9a" stroke-width="1"/><path d="M0 12.5 H14" stroke="#9a9a9a" stroke-width="1"/></svg>
<svg class="b" style="left:1862px;top:430px;" width="14" height="4" viewBox="0 0 14 4"><circle cx="2" cy="2" r="1.4" fill="#d0d0d0"/><circle cx="7" cy="2" r="1.4" fill="#d0d0d0"/><circle cx="12" cy="2" r="1.4" fill="#d0d0d0"/></svg>
<div class="b" style="left:1634px;top:451px;width:269px;height:1px;background:#444444;"></div>
<span class="t" id="t35" style="top:455.5px;height:24px;line-height:24px;font-size:12px;color:#ffffff;font-weight:700;left:1656px;transform-origin:0 50%;transform:scaleX(0.8332);">文字ツールオプション</span>
<span class="t" id="t36" style="top:482.5px;height:24px;line-height:24px;font-size:17px;color:#e0e0e0;font-weight:700;left:1662px;transform-origin:0 50%;font-family:'Liberation Serif',serif;">T</span>
<span class="t" id="t37" style="top:484px;height:24px;line-height:24px;font-size:12px;color:#e0e0e0;font-weight:700;left:1674px;transform-origin:0 50%;font-family:'Liberation Serif',serif;">T</span>
<span class="t" id="t38" style="top:482.5px;height:24px;line-height:24px;font-size:17px;color:#e0e0e0;font-weight:700;left:1695px;transform-origin:0 50%;font-family:'Liberation Serif',serif;">T</span>
<span class="t" id="t39" style="top:479.5px;height:24px;line-height:24px;font-size:8px;color:#e0e0e0;font-weight:700;left:1707px;transform-origin:0 50%;font-family:'Liberation Serif',serif;">1</span>
<span class="t" id="t40" style="top:482.5px;height:24px;line-height:24px;font-size:17px;color:#e0e0e0;font-weight:700;left:1720px;transform-origin:0 50%;font-family:'Liberation Serif',serif;">T</span>
<span class="t" id="t41" style="top:486.5px;height:24px;line-height:24px;font-size:8px;color:#e0e0e0;font-weight:700;left:1731.5px;transform-origin:0 50%;font-family:'Liberation Serif',serif;">1</span>
<span class="t" id="t42" style="top:482.5px;height:24px;line-height:24px;font-size:17px;color:#e0e0e0;font-weight:700;left:1744px;transform-origin:0 50%;font-family:'Liberation Serif',serif;">T</span>
<div class="b" style="left:1744px;top:502px;width:12px;height:1px;background:#e0e0e0;"></div>
<span class="t" id="t43" style="top:482.5px;height:24px;line-height:24px;font-size:17px;color:#e0e0e0;font-weight:700;left:1768px;transform-origin:0 50%;font-family:'Liberation Serif',serif;">T</span>
<div class="b" style="left:1767px;top:494px;width:13px;height:1px;background:#e0e0e0;"></div>
<span class="t" id="t44" style="top:482.5px;height:24px;line-height:24px;font-size:18px;color:#e0e0e0;left:1791px;transform-origin:0 50%;font-family:'Liberation Serif',serif;">1</span>
<span class="t" id="t45" style="top:479px;height:24px;line-height:24px;font-size:11px;color:#e0e0e0;left:1798px;transform-origin:0 50%;font-family:'Liberation Serif',serif;">st</span>
<span class="t" id="t46" style="top:482.5px;height:24px;line-height:24px;font-size:18px;color:#e0e0e0;left:1815px;transform-origin:0 50%;font-family:'Liberation Serif',serif;">½</span>
<div class="b" style="left:1634px;top:517px;width:269px;height:10px;overflow:hidden;"><span class="t" style="left:42px;top:-4px;font-size:17px;line-height:24px;color:#9a9a9a;font-style:italic;font-family:'Liberation Serif',serif;">fi</span><span class="t" style="left:62px;top:-4px;font-size:17px;line-height:24px;color:#e0e0e0;font-style:italic;font-family:'Liberation Serif',serif;">σ</span><span class="t" style="left:85px;top:-4px;font-size:17px;line-height:24px;color:#9a9a9a;font-style:italic;font-family:'Liberation Serif',serif;">st</span><span class="t" style="left:110px;top:-4px;font-size:17px;line-height:24px;color:#e0e0e0;font-style:italic;font-family:'Liberation Serif',serif;">A</span><span class="t" style="left:134px;top:-4px;font-size:17px;line-height:24px;color:#9a9a9a;font-style:italic;font-family:'Liberation Serif',serif;">T</span><span class="t" style="left:158px;top:-4px;font-size:17px;line-height:24px;color:#e0e0e0;font-family:'Liberation Serif',serif;">1</span></div>
<div class="b" style="left:1903px;top:136px;width:17px;height:391px;background:#4a4a4a;"></div>
<svg class="b" style="left:1907px;top:145px;" width="9" height="6" viewBox="0 0 9 6"><path d="M0.5 5 L4.5 1 L8.5 5" fill="none" stroke="#7a7a7a" stroke-width="1.2"/></svg>
<svg class="b" style="left:1907px;top:514px;" width="9" height="6" viewBox="0 0 9 6"><path d="M0.5 1 L4.5 5 L8.5 1" fill="none" stroke="#7a7a7a" stroke-width="1.2"/></svg>
<div class="b" style="left:1905px;top:154px;width:12px;height:158px;background:#6b6b6b;"></div>
<div class="b" style="left:1634px;top:552px;width:286px;height:2px;background:#3a3a3a;"></div>
<div class="b" style="left:1634px;top:554px;width:286px;height:29px;background:#424242;"></div>
<div class="b" style="left:1634px;top:554px;width:81px;height:29px;background:#535353;"></div>
<div class="b" style="left:1715px;top:554px;width:1px;height:28px;background:#3a3a3a;"></div>
<div class="b" style="left:1716px;top:554px;width:58px;height:28px;background:#474747;"></div>
<div class="b" style="left:1774px;top:554px;width:1px;height:28px;background:#3a3a3a;"></div>
<div class="b" style="left:1634px;top:582px;width:286px;height:1px;background:#3a3a3a;"></div>
<div class="b" style="left:1634px;top:554px;width:81px;height:1px;background:#535353;"></div>
<span class="t" id="t47" style="top:555.5px;height:24px;line-height:24px;font-size:12px;color:#f0f0f0;font-weight:700;left:1675px;transform-origin:0 50%;transform:scaleX(0.6717);">レイヤー</span>
<span class="t" id="t48" style="top:555.5px;height:24px;line-height:24px;font-size:12px;color:#c8c8c8;left:1724.5px;transform-origin:0 50%;transform:scaleX(0.6875);">チャンネル</span>
<svg class="b" style="left:1904px;top:565px;" width="11" height="8" viewBox="0 0 11 8"><path d="M0 0.5 H11 M0 3 H11 M0 5.5 H11 M0 8 H11" stroke="#c0c0c0" stroke-width="1"/></svg>
<div class="b" style="left:1634px;top:583px;width:286px;height:449px;background:#535353;"></div>
<div class="b" style="left:1634px;top:615px;width:286px;height:1px;background:#444444;"></div>
<div class="b" style="left:1634px;top:644px;width:286px;height:1px;background:#444444;"></div>
<span class="t" id="t49" style="top:589.5px;height:24px;line-height:24px;font-size:14px;color:#c4c4c4;font-weight:700;left:1832px;transform-origin:50% 50%;margin-left:-300px;width:600px;text-align:center;font-family:'Liberation Serif',serif;">T</span>
<svg class="b" style="left:1849px;top:595px;" width="13" height="13" viewBox="0 0 13 13"><rect x="2" y="2" width="9" height="9" fill="none" stroke="#c4c4c4" stroke-width="1.2"/><g fill="#535353" stroke="#c4c4c4" stroke-width="1"><rect x="0.5" y="0.5" width="3" height="3"/><rect x="9.5" y="0.5" width="3" height="3"/><rect x="0.5" y="9.5" width="3" height="3"/><rect x="9.5" y="9.5" width="3" height="3"/></g></svg>
<svg class="b" style="left:1874px;top:595px;" width="12" height="14" viewBox="0 0 12 14"><path d="M3.5 0.7 H8 L11.3 4 V11 H6" fill="none" stroke="#c4c4c4" stroke-width="1.2"/><path d="M7.6 0.7 V4.4 H11.3" fill="none" stroke="#c4c4c4" stroke-width="1"/><rect x="0.5" y="6.5" width="6.5" height="6.5" fill="#c4c4c4"/></svg>
<div class="b" style="left:1907px;top:592px;width:9px;height:20px;background:#484848;border-radius:5px;border:1px solid #3e3e3e;"></div>
<div class="b" style="left:1907px;top:592px;width:9px;height:9px;background:#b4b4b4;border-radius:5px;"></div>
<div class="b" style="left:1642px;top:621px;width:150px;height:20px;background:#4a4a4a;border:1px solid #5a5a5a;border-radius:3px;"></div>
<span class="t" id="t50" style="top:618px;height:24px;line-height:24px;font-size:12px;color:#9a9a9a;left:1805px;transform-origin:0 50%;transform:scaleX(0.9328);">不透明度 :</span>
<div class="b" style="left:1861px;top:621px;width:54px;height:18px;background:#4a4a4a;border:1px solid #5c5c5c;border-radius:3px;"></div>
<div class="b" style="left:1863px;top:623px;width:34px;height:14px;background:#454545;"></div>
<div class="b" style="left:1899px;top:622px;width:1px;height:16px;background:#5c5c5c;"></div>
<span class="t" id="t51" style="top:618.5px;height:24px;line-height:24px;font-size:12px;color:#8c8c8c;left:1865px;transform-origin:0 50%;transform:scaleX(0.9120);">100%</span>
<svg class="b" style="left:1903px;top:628px;" width="9" height="6" viewBox="0 0 9 6"><path d="M0.5 0.5 L4.5 4.5 L8.5 0.5" fill="none" stroke="#6e6e6e" stroke-width="1.2"/></svg>
<div class="b" style="left:1861px;top:650px;width:54px;height:18px;background:#4a4a4a;border:1px solid #5c5c5c;border-radius:3px;"></div>
<div class="b" style="left:1863px;top:652px;width:34px;height:14px;background:#454545;"></div>
<div class="b" style="left:1899px;top:651px;width:1px;height:16px;background:#5c5c5c;"></div>
<span class="t" id="t52" style="top:647.5px;height:24px;line-height:24px;font-size:12px;color:#8c8c8c;left:1865px;transform-origin:0 50%;transform:scaleX(0.9120);">100%</span>
<svg class="b" style="left:1903px;top:657px;" width="9" height="6" viewBox="0 0 9 6"><path d="M0.5 0.5 L4.5 4.5 L8.5 0.5" fill="none" stroke="#6e6e6e" stroke-width="1.2"/></svg>
<span class="t" id="t53" style="top:647.5px;height:24px;line-height:24px;font-size:12px;color:#9a9a9a;left:1828px;transform-origin:0 50%;transform:scaleX(0.9129);">塗り :</span>
<svg class="b" style="left:1681px;top:653px;" width="12" height="12" viewBox="0 0 12 12"><rect x="0.5" y="0.5" width="11" height="11" fill="none" stroke="#a4a4a4" stroke-width="1"/><g fill="#a4a4a4"><rect x="1" y="1" width="3.4" height="3.4"/><rect x="7.6" y="1" width="3.4" height="3.4"/><rect x="4.3" y="4.3" width="3.4" height="3.4"/><rect x="1" y="7.6" width="3.4" height="3.4"/><rect x="7.6" y="7.6" width="3.4" height="3.4"/></g></svg>
<svg class="b" style="left:1702px;top:652px;" width="14" height="15" viewBox="0 0 14 15"><path d="M12.5 1.5 L6.5 8.5" stroke="#a4a4a4" stroke-width="2.4" stroke-linecap="round"/><path d="M5.6 8.4 C3.8 8.4 3.2 10 3 11.2 C2.8 12.3 2 13 1.2 13.4 C3.8 14.2 7 13 7.3 10 Z" fill="#a4a4a4"/></svg>
<svg class="b" style="left:1724px;top:652px;" width="14" height="14" viewBox="0 0 14 14"><g transform="scale(0.875)"><path d="M8 0 L11 3.4 H9 V7 H12.6 V5 L16 8 L12.6 11 V9 H9 V12.6 H11 L8 16 L5 12.6 H7 V9 H3.4 V11 L0 8 L3.4 5 V7 H7 V3.4 H5 Z" fill="#a4a4a4"/></g></svg>
<svg class="b" style="left:1746px;top:652px;" width="15" height="15" viewBox="0 0 15 15"><path d="M3.5 0 V12 H15 M0 3.5 H8 L12 7.5 V15" fill="none" stroke="#a4a4a4" stroke-width="1.2"/><path d="M12 0 V2.5 M13.5 3.5 H15" stroke="#a4a4a4" stroke-width="1" stroke-dasharray="1 1"/></svg>
<svg class="b" style="left:1769px;top:651px;" width="12" height="14" viewBox="0 0 12 14"><path d="M3 6 V4 C3 0.6 9 0.6 9 4 V6" fill="none" stroke="#a4a4a4" stroke-width="1.5"/><rect x="0.8" y="6" width="10.4" height="7.5" fill="#a4a4a4"/><circle cx="6" cy="9.6" r="1.2" fill="#535353"/></svg>
<div class="b" style="left:1634px;top:672px;width:269px;height:4px;background:#474747;"></div>
<div class="b" style="left:1903px;top:672px;width:17px;height:336px;background:#4e4e4e;"></div>
<div class="b" style="left:1634px;top:792px;width:269px;height:215px;background:#4f4f4f;"></div>
<div class="b" style="left:1634px;top:676px;width:259px;height:26px;background:#6b6b6b;"></div>
<svg class="b" style="left:1674px;top:678px;" width="29" height="21" viewBox="0 0 29 21"><path d="M0 0.6 H4 M14 0.6 H28.4 V8 M28.4 13 V20.4 H22 M0 20.4 H3" fill="none" stroke="#e4e4e4" stroke-width="1.2"/><path d="M6 18.5 C10 14.5 15 14.5 19 18.5" fill="none" stroke="#e4e4e4" stroke-width="1"/></svg>
<span class="t" id="t54" style="top:674px;height:24px;line-height:24px;font-size:11px;color:#e8e8e8;left:1685px;transform-origin:50% 50%;margin-left:-300px;width:600px;text-align:center;font-family:'Liberation Serif',serif;">T</span>
<span class="t" id="t55" style="top:677.5px;height:24px;line-height:24px;font-size:12px;color:#f0f0f0;left:1708.5px;transform-origin:0 50%;transform:scaleX(0.9074);">VINTAGE</span>
<span class="t" id="t56" style="top:677px;height:24px;line-height:24px;font-size:15px;color:#f0f0f0;left:1877.5px;transform-origin:0 50%;font-style:italic;transform:scaleX(1.0281);">fx</span>
<svg class="b" style="left:1895px;top:686px;" width="9" height="6" viewBox="0 0 9 6"><path d="M0.5 5 L4.5 1 L8.5 5" fill="none" stroke="#e0e0e0" stroke-width="1.2"/></svg>
<svg class="b" style="left:1684px;top:706px;" width="13" height="9" viewBox="0 0 13 9"><path d="M0.5 4.5 C3 0.3 10 0.3 12.5 4.5 C10 8.7 3 8.7 0.5 4.5 Z" fill="#e0e0e0"/><circle cx="6.5" cy="4.5" r="2.6" fill="#535353"/><circle cx="6.5" cy="4.5" r="1.3" fill="#e0e0e0"/></svg>
<span class="t" id="t57" style="top:698.5px;height:24px;line-height:24px;font-size:12px;color:#f0f0f0;left:1703px;transform-origin:0 50%;transform:scaleX(0.9577);">効果</span>
<svg class="b" style="left:1701px;top:724px;" width="13" height="9" viewBox="0 0 13 9"><path d="M0.5 4.5 C3 0.3 10 0.3 12.5 4.5 C10 8.7 3 8.7 0.5 4.5 Z" fill="#e0e0e0"/><circle cx="6.5" cy="4.5" r="2.6" fill="#535353"/><circle cx="6.5" cy="4.5" r="1.3" fill="#e0e0e0"/></svg>
<span class="t" id="t58" style="top:716.5px;height:24px;line-height:24px;font-size:12px;color:#f0f0f0;left:1719px;transform-origin:0 50%;transform:scaleX(0.7645);">グラデーションオーバーレイ</span>
<div class="b" style="left:1634px;top:739px;width:269px;height:1px;background:#474747;"></div>
<div class="b" style="left:1634px;top:765px;width:269px;height:1px;background:#474747;"></div>
<div class="b" style="left:1634px;top:791px;width:269px;height:1px;background:#474747;"></div>
<div class="b" style="left:1672px;top:744px;width:28px;height:17px;background:linear-gradient(115deg,#0c0c0c,#f4f4f4 90%);border:1px solid #2e2e2e;"></div>
<div class="b" style="left:1692px;top:745px;width:7px;height:15px;background:#474747;"></div>
<svg class="b" style="left:1703px;top:745px;" width="8" height="16" viewBox="0 0 8 16"><rect x="1.5" y="1" width="5" height="7" rx="2.5" fill="none" stroke="#e0e0e0" stroke-width="1.3"/><rect x="1.5" y="8" width="5" height="7" rx="2.5" fill="none" stroke="#e0e0e0" stroke-width="1.3"/><path d="M4 5 V11" stroke="#e0e0e0" stroke-width="1.3"/></svg>
<div class="b" style="left:1715px;top:744px;width:32px;height:17px;background:#ffffff;border:1px solid #2e2e2e;"></div>
<span class="t" id="t59" style="top:741.5px;height:24px;line-height:24px;font-size:12px;color:#f0f0f0;left:1756px;transform-origin:0 50%;transform:scaleX(0.7891);">グラデーション 1</span>
<div class="b" style="left:1672px;top:771px;width:28px;height:17px;background:linear-gradient(90deg,#b8b8b8,#ffffff);border:1px solid #2e2e2e;"></div>
<span class="t" id="t60" style="top:767.5px;height:24px;line-height:24px;font-size:12px;color:#f0f0f0;left:1711px;transform-origin:0 50%;transform:scaleX(0.9161);">背景</span>
<svg class="b" style="left:1876px;top:772px;" width="12" height="14" viewBox="0 0 12 14"><path d="M3.2 6 V4.2 C3.2 1.2 8.8 1.2 8.8 4.2 V6" fill="none" stroke="#e0e0e0" stroke-width="1.3"/><rect x="1.4" y="6.2" width="9.2" height="7" fill="none" stroke="#e0e0e0" stroke-width="1.3"/><rect x="5.2" y="8.6" width="1.6" height="2.4" fill="#e0e0e0"/></svg>
<div class="b" style="left:1634px;top:1007px;width:286px;height:1px;background:#444444;"></div>
<svg class="b" style="left:1716px;top:1014px;" width="16" height="10" viewBox="0 0 16 10"><path d="M7 2 H4.5 A3 3 0 0 0 4.5 8 H7 M9 2 H11.5 A3 3 0 0 1 11.5 8 H9 M5 5 H11" fill="none" stroke="#bdbdbd" stroke-width="1.5"/></svg>
<span class="t" id="t61" style="top:1007px;height:24px;line-height:24px;font-size:14px;color:#bdbdbd;left:1746px;transform-origin:0 50%;font-style:italic;transform:scaleX(1.0100);">fx</span>
<svg class="b" style="left:1771px;top:1013px;" width="14" height="11" viewBox="0 0 14 11"><rect x="0" y="0" width="14" height="11" fill="#bdbdbd"/><circle cx="7" cy="5.5" r="3.3" fill="#535353"/></svg>
<svg class="b" style="left:1798px;top:1013px;" width="13" height="13" viewBox="0 0 13 13"><circle cx="6.5" cy="6.5" r="5.6" fill="none" stroke="#bdbdbd" stroke-width="1.4"/><path d="M10.5 2.5 A5.6 5.6 0 0 1 2.5 10.5 Z" fill="#bdbdbd"/></svg>
<svg class="b" style="left:1825px;top:1013px;" width="14" height="12" viewBox="0 0 14 12"><path d="M0 1.5 H5 L6.5 3 H14 V12 H0 Z" fill="#bdbdbd"/></svg>
<svg class="b" style="left:1852px;top:1013px;" width="13" height="13" viewBox="0 0 13 13"><rect x="0.7" y="0.7" width="11.6" height="11.6" fill="none" stroke="#bdbdbd" stroke-width="1.3"/><path d="M6.5 3.5 V9.5 M3.5 6.5 H9.5" stroke="#bdbdbd" stroke-width="1.3"/></svg>
<svg class="b" style="left:1880px;top:1012px;" width="11" height="13" viewBox="0 0 11 13"><path d="M0.5 2.7 H10.5 M3.8 2.5 V1 H7.2 V2.5" fill="none" stroke="#bdbdbd" stroke-width="1.2"/><path d="M1.6 3.5 V12.3 H9.4 V3.5" fill="none" stroke="#bdbdbd" stroke-width="1.2"/><path d="M3.8 4.5 V10.8 M5.5 4.5 V10.8 M7.2 4.5 V10.8" stroke="#bdbdbd" stroke-width="1"/></svg>
<div class="b" style="left:853px;top:262px;width:821px;height:521px;background:#535353;border-radius:8px;box-shadow:0 14px 40px 4px rgba(0,0,0,.42),0 0 4px rgba(0,0,0,.4);overflow:hidden;"><div class="b" style="left:0;top:0;width:821px;height:30px;background:#ffffff;"></div></div>
<span class="t" id="t62" style="top:265px;height:24px;line-height:24px;font-size:12px;color:#1a1a1a;left:861px;transform-origin:0 50%;transform:scaleX(0.7575);">レイヤースタイル</span>
<svg class="b" style="left:1654px;top:271px;" width="11" height="11" viewBox="0 0 11 11"><path d="M0.5 0.5 L10.5 10.5 M10.5 0.5 L0.5 10.5" stroke="#111" stroke-width="1.1"/></svg>
<div class="b" style="left:863px;top:303px;width:230px;height:470px;border:1px solid #414141;"></div>
<div class="b" style="left:1075px;top:305px;width:16px;height:440px;background:#4a4a4a;"></div>
<div class="b" style="left:865px;top:330px;width:210px;height:1px;background:#414141;"></div>
<span class="t" id="t63" style="top:305px;height:24px;line-height:24px;font-size:12px;color:#e2e2e2;left:871px;transform-origin:0 50%;transform:scaleX(0.7498);">スタイル</span>
<div class="b" style="left:865px;top:356px;width:210px;height:1px;background:#414141;"></div>
<span class="t" id="t64" style="top:331px;height:24px;line-height:24px;font-size:12px;color:#e2e2e2;left:872px;transform-origin:0 50%;transform:scaleX(0.8515);">レイヤー効果</span>
<div class="b" style="left:865px;top:382px;width:210px;height:1px;background:#414141;"></div>
<div class="b" style="left:870px;top:363px;width:12px;height:12px;background:#474747;border:1px solid #787878;border-radius:2.5px;"></div>
<span class="t" id="t65" style="top:357px;height:24px;line-height:24px;font-size:12px;color:#e2e2e2;left:888px;transform-origin:0 50%;transform:scaleX(0.7811);">ベベルとエンボス</span>
<div class="b" style="left:865px;top:408px;width:210px;height:1px;background:#414141;"></div>
<div class="b" style="left:880px;top:389px;width:12px;height:12px;background:#474747;border:1px solid #787878;border-radius:2.5px;"></div>
<span class="t" id="t66" style="top:383px;height:24px;line-height:24px;font-size:12px;color:#e2e2e2;left:898px;transform-origin:0 50%;transform:scaleX(0.9161);">輪郭</span>
<div class="b" style="left:865px;top:434px;width:210px;height:1px;background:#414141;"></div>
<div class="b" style="left:880px;top:415px;width:12px;height:12px;background:#474747;border:1px solid #787878;border-radius:2.5px;"></div>
<span class="t" id="t67" style="top:409px;height:24px;line-height:24px;font-size:12px;color:#e2e2e2;left:898px;transform-origin:0 50%;transform:scaleX(0.7055);">テクスチャ</span>
<div class="b" style="left:865px;top:460px;width:210px;height:1px;background:#414141;"></div>
<div class="b" style="left:870px;top:441px;width:12px;height:12px;background:#474747;border:1px solid #787878;border-radius:2.5px;"></div>
<span class="t" id="t68" style="top:435px;height:24px;line-height:24px;font-size:12px;color:#e2e2e2;left:888px;transform-origin:0 50%;transform:scaleX(0.9440);">境界線</span>
<svg class="b" style="left:1057px;top:440.5px;" width="14" height="14" viewBox="0 0 14 14"><rect x="0.6" y="0.6" width="12.8" height="12.8" fill="none" stroke="#d4d4d4" stroke-width="1.2"/><path d="M7 3.2 V10.8 M3.2 7 H10.8" stroke="#e8e8e8" stroke-width="1.8"/></svg>
<div class="b" style="left:865px;top:486px;width:210px;height:1px;background:#414141;"></div>
<div class="b" style="left:870px;top:467px;width:12px;height:12px;background:#474747;border:1px solid #787878;border-radius:2.5px;"></div>
<span class="t" id="t69" style="top:461px;height:24px;line-height:24px;font-size:12px;color:#e2e2e2;left:888px;transform-origin:0 50%;transform:scaleX(0.8641);">シャドウ (内側)</span>
<svg class="b" style="left:1057px;top:466.5px;" width="14" height="14" viewBox="0 0 14 14"><rect x="0.6" y="0.6" width="12.8" height="12.8" fill="none" stroke="#d4d4d4" stroke-width="1.2"/><path d="M7 3.2 V10.8 M3.2 7 H10.8" stroke="#e8e8e8" stroke-width="1.8"/></svg>
<div class="b" style="left:865px;top:512px;width:210px;height:1px;background:#414141;"></div>
<div class="b" style="left:870px;top:493px;width:12px;height:12px;background:#474747;border:1px solid #787878;border-radius:2.5px;"></div>
<span class="t" id="t70" style="top:487px;height:24px;line-height:24px;font-size:12px;color:#e2e2e2;left:888px;transform-origin:0 50%;transform:scaleX(1.0282);">光彩 (内側)</span>
<div class="b" style="left:865px;top:538px;width:210px;height:1px;background:#414141;"></div>
<div class="b" style="left:870px;top:519px;width:12px;height:12px;background:#474747;border:1px solid #787878;border-radius:2.5px;"></div>
<span class="t" id="t71" style="top:513px;height:24px;line-height:24px;font-size:12px;color:#e2e2e2;left:888px;transform-origin:0 50%;transform:scaleX(0.7497);">サテン</span>
<div class="b" style="left:865px;top:564px;width:210px;height:1px;background:#414141;"></div>
<div class="b" style="left:870px;top:545px;width:12px;height:12px;background:#474747;border:1px solid #787878;border-radius:2.5px;"></div>
<span class="t" id="t72" style="top:539px;height:24px;line-height:24px;font-size:12px;color:#e2e2e2;left:888px;transform-origin:0 50%;transform:scaleX(0.7600);">カラーオーバーレイ</span>
<svg class="b" style="left:1057px;top:544.5px;" width="14" height="14" viewBox="0 0 14 14"><rect x="0.6" y="0.6" width="12.8" height="12.8" fill="none" stroke="#d4d4d4" stroke-width="1.2"/><path d="M7 3.2 V10.8 M3.2 7 H10.8" stroke="#e8e8e8" stroke-width="1.8"/></svg>
<div class="b" style="left:865px;top:565px;width:210px;height:25px;background:#6b6b6b;"></div>
<div class="b" style="left:865px;top:590px;width:210px;height:1px;background:#414141;"></div>
<div class="b" style="left:870px;top:571px;width:12px;height:12px;background:#dcdcdc;border-radius:2px;"></div>
<svg class="b" style="left:870px;top:571px;" width="12" height="12" viewBox="0 0 12 12"><path d="M2.6 6.2 L5 8.6 L9.6 3.4" fill="none" stroke="#2a2a2a" stroke-width="1.9"/></svg>
<span class="t" id="t73" style="top:565px;height:24px;line-height:24px;font-size:12px;color:#f4f4f4;left:888px;transform-origin:0 50%;transform:scaleX(0.7517);">グラデーションオーバーレイ</span>
<svg class="b" style="left:1057px;top:570.5px;" width="14" height="14" viewBox="0 0 14 14"><rect x="0.6" y="0.6" width="12.8" height="12.8" fill="none" stroke="#d4d4d4" stroke-width="1.2"/><path d="M7 3.2 V10.8 M3.2 7 H10.8" stroke="#e8e8e8" stroke-width="1.8"/></svg>
<div class="b" style="left:865px;top:616px;width:210px;height:1px;background:#414141;"></div>
<div class="b" style="left:870px;top:597px;width:12px;height:12px;background:#474747;border:1px solid #787878;border-radius:2.5px;"></div>
<span class="t" id="t74" style="top:591px;height:24px;line-height:24px;font-size:12px;color:#e2e2e2;left:888px;transform-origin:0 50%;transform:scaleX(0.7713);">パターンオーバーレイ</span>
<div class="b" style="left:865px;top:642px;width:210px;height:1px;background:#414141;"></div>
<div class="b" style="left:870px;top:623px;width:12px;height:12px;background:#474747;border:1px solid #787878;border-radius:2.5px;"></div>
<span class="t" id="t75" style="top:617px;height:24px;line-height:24px;font-size:12px;color:#e2e2e2;left:888px;transform-origin:0 50%;transform:scaleX(1.0282);">光彩 (外側)</span>
<div class="b" style="left:865px;top:668px;width:210px;height:1px;background:#414141;"></div>
<div class="b" style="left:870px;top:649px;width:12px;height:12px;background:#474747;border:1px solid #787878;border-radius:2.5px;"></div>
<span class="t" id="t76" style="top:643px;height:24px;line-height:24px;font-size:12px;color:#e2e2e2;left:888px;transform-origin:0 50%;transform:scaleX(0.7290);">ドロップシャドウ</span>
<svg class="b" style="left:1057px;top:648.5px;" width="14" height="14" viewBox="0 0 14 14"><rect x="0.6" y="0.6" width="12.8" height="12.8" fill="none" stroke="#d4d4d4" stroke-width="1.2"/><path d="M7 3.2 V10.8 M3.2 7 H10.8" stroke="#e8e8e8" stroke-width="1.8"/></svg>
<div class="b" style="left:865px;top:304px;width:210px;height:1px;background:#414141;"></div>
<span class="t" id="t77" style="top:748px;height:24px;line-height:24px;font-size:15px;color:#d4d4d4;left:873px;transform-origin:0 50%;font-style:italic;transform:scaleX(1.0281);">fx</span>
<svg class="b" style="left:883px;top:765px;" width="5" height="3" viewBox="0 0 5 3"><path d="M0 0 H5 L2.5 3 Z" fill="#e0e0e0"/></svg>
<svg class="b" style="left:900px;top:754px;" width="12" height="12" viewBox="0 0 12 12"><path d="M6 0.5 L11.5 6.5 H8.5 V11.5 H3.5 V6.5 H0.5 Z" fill="#8a8a8a"/></svg>
<svg class="b" style="left:927px;top:754px;" width="12" height="12" viewBox="0 0 12 12"><path d="M6 11.5 L11.5 5.5 H8.5 V0.5 H3.5 V5.5 H0.5 Z" fill="#8a8a8a"/></svg>
<svg class="b" style="left:1071px;top:753px;" width="11" height="13" viewBox="0 0 11 13"><path d="M0.5 2.7 H10.5 M3.8 2.5 V1 H7.2 V2.5" fill="none" stroke="#d8d8d8" stroke-width="1.2"/><path d="M1.6 3.5 V12.3 H9.4 V3.5" fill="none" stroke="#d8d8d8" stroke-width="1.2"/><path d="M3.8 4.5 V10.8 M5.5 4.5 V10.8 M7.2 4.5 V10.8" stroke="#d8d8d8" stroke-width="1"/></svg>
<div class="b" style="left:1109px;top:309px;width:406px;height:464px;border:1px solid #454545;"></div>
<div class="b" style="left:1126px;top:302px;width:130px;height:14px;background:#535353;"></div>
<span class="t" id="t78" style="top:297.5px;height:24px;line-height:24px;font-size:12px;color:#e2e2e2;left:1131px;transform-origin:0 50%;transform:scaleX(0.7645);">グラデーションオーバーレイ</span>
<div class="b" style="left:1119px;top:324px;width:386px;height:208px;border:1px solid #454545;"></div>
<div class="b" style="left:1137px;top:318px;width:70px;height:12px;background:#535353;"></div>
<span class="t" id="t79" style="top:312.5px;height:24px;line-height:24px;font-size:12px;color:#e2e2e2;left:1141px;transform-origin:0 50%;transform:scaleX(0.7402);">グラデーション</span>
<span class="t" id="t80" style="top:334.5px;height:24px;line-height:24px;font-size:12px;color:#e2e2e2;right:706px;transform-origin:100% 50%;transform:scaleX(0.9149);">描画モード :</span>
<div class="b" style="left:1220px;top:336px;width:123px;height:22px;background:#454545;border:1px solid #636363;border-radius:3px;"></div>
<svg class="b" style="left:1330.5px;top:345.5px;" width="8" height="5" viewBox="0 0 8 5"><path d="M0.5 0.5 L4 4 L7.5 0.5" fill="none" stroke="#d0d0d0" stroke-width="1.1"/></svg>
<span class="t" id="t81" style="top:335.5px;height:24px;line-height:24px;font-size:12px;color:#e6e6e6;left:1229px;transform-origin:0 50%;transform:scaleX(0.9577);">通常</span>
<div class="b" style="left:1352px;top:340px;width:12px;height:12px;background:#dcdcdc;border-radius:2px;"></div>
<svg class="b" style="left:1352px;top:340px;" width="12" height="12" viewBox="0 0 12 12"><path d="M2.6 6.2 L5 8.6 L9.6 3.4" fill="none" stroke="#2a2a2a" stroke-width="1.9"/></svg>
<span class="t" id="t82" style="top:334.5px;height:24px;line-height:24px;font-size:12px;color:#e2e2e2;left:1369px;transform-origin:0 50%;transform:scaleX(0.7392);">ディザ</span>
<span class="t" id="t83" style="top:358.5px;height:24px;line-height:24px;font-size:12px;color:#e2e2e2;right:706px;transform-origin:100% 50%;transform:scaleX(1.0188);">不透明度(P) :</span>
<div class="b" style="left:1226px;top:365px;width:109px;height:3px;background:#6c6c6c;border-radius:1px;"></div>
<svg class="b" style="left:1327px;top:366px;" width="14" height="11" viewBox="0 0 14 11"><path d="M7 0.4 L12.3 6.6 C13.4 8.4 13 10.6 10.8 10.6 H3.2 C1 10.6 0.6 8.4 1.7 6.6 Z" fill="#ffffff" stroke="#3a3a3a" stroke-width="0.6"/></svg>
<div class="b" style="left:1350px;top:360px;width:41px;height:20px;background:#454545;border:1px solid #666666;border-radius:2px;"></div>
<span class="t" id="t84" style="top:358.5px;height:24px;line-height:24px;font-size:12px;color:#f0f0f0;left:1354px;transform-origin:0 50%;transform:scaleX(0.8487);">100</span>
<span class="t" id="t85" style="top:358.5px;height:24px;line-height:24px;font-size:12px;color:#e2e2e2;left:1394px;transform-origin:0 50%;transform:scaleX(0.9370);">%</span>
<span class="t" id="t86" style="top:386.5px;height:24px;line-height:24px;font-size:12px;color:#e2e2e2;right:706px;transform-origin:100% 50%;transform:scaleX(0.7740);">グラデーション :</span>
<div class="b" style="left:1220px;top:386px;width:124px;height:24px;background:#454545;border:1px solid #636363;border-radius:3px;"></div>
<div class="b" style="left:1221px;top:387px;width:108px;height:22px;background:linear-gradient(90deg,#ffb907,#ffd52e 45%,#fef85a);"></div>
<svg class="b" style="left:1332px;top:396px;" width="9" height="6" viewBox="0 0 9 6"><path d="M0.5 0.5 L4.5 4.5 L8.5 0.5" fill="none" stroke="#d0d0d0" stroke-width="1.2"/></svg>
<div class="b" style="left:1352px;top:392px;width:12px;height:12px;background:#474747;border:1px solid #787878;border-radius:2.5px;"></div>
<span class="t" id="t87" style="top:386.5px;height:24px;line-height:24px;font-size:12px;color:#e2e2e2;left:1369px;transform-origin:0 50%;transform:scaleX(0.9872);">逆方向(R)</span>
<span class="t" id="t88" style="top:412.5px;height:24px;line-height:24px;font-size:12px;color:#e2e2e2;right:706px;transform-origin:100% 50%;transform:scaleX(0.8048);">スタイル :</span>
<div class="b" style="left:1220px;top:415px;width:123px;height:22px;background:#454545;border:1px solid #636363;border-radius:3px;"></div>
<svg class="b" style="left:1330.5px;top:424.5px;" width="8" height="5" viewBox="0 0 8 5"><path d="M0.5 0.5 L4 4 L7.5 0.5" fill="none" stroke="#d0d0d0" stroke-width="1.1"/></svg>
<span class="t" id="t89" style="top:414.5px;height:24px;line-height:24px;font-size:12px;color:#e6e6e6;left:1229px;transform-origin:0 50%;transform:scaleX(0.9577);">線形</span>
<div class="b" style="left:1352px;top:418px;width:12px;height:12px;background:#dcdcdc;border-radius:2px;"></div>
<svg class="b" style="left:1352px;top:418px;" width="12" height="12" viewBox="0 0 12 12"><path d="M2.6 6.2 L5 8.6 L9.6 3.4" fill="none" stroke="#2a2a2a" stroke-width="1.9"/></svg>
<span class="t" id="t90" style="top:412.5px;height:24px;line-height:24px;font-size:12px;color:#e2e2e2;left:1369px;transform-origin:0 50%;transform:scaleX(0.9038);">シェイプ内で作成(I)</span>
<span class="t" id="t91" style="top:444px;height:24px;line-height:24px;font-size:12px;color:#e2e2e2;right:706px;transform-origin:100% 50%;transform:scaleX(1.0353);">角度(N) :</span>
<svg class="b" style="left:1219px;top:437px;" width="38" height="38" viewBox="0 0 38 38"><circle cx="19" cy="19" r="17.5" fill="none" stroke="#9c9c9c" stroke-width="1.2"/><path d="M19 19 V4" stroke="#c8c8c8" stroke-width="1.2"/><circle cx="19" cy="19" r="1.8" fill="#c8c8c8"/></svg>
<div class="b" style="left:1260px;top:445px;width:41px;height:21px;background:#454545;border:1px solid #666666;border-radius:2px;"></div>
<span class="t" id="t92" style="top:444px;height:24px;line-height:24px;font-size:12px;color:#f0f0f0;left:1264px;transform-origin:0 50%;transform:scaleX(0.8234);">90</span>
<span class="t" id="t93" style="top:445px;height:24px;line-height:24px;font-size:13px;color:#e2e2e2;left:1304px;transform-origin:0 50%;">°</span>
<div class="b" style="left:1333px;top:444px;width:96px;height:23px;background:#474747;border:1px solid #616161;border-radius:3px;"></div>
<span class="t" id="t94" style="top:444px;height:24px;line-height:24px;font-size:12px;color:#f0f0f0;left:1344px;transform-origin:0 50%;transform:scaleX(0.9720);">整列の初期化</span>
<span class="t" id="t95" style="top:477.5px;height:24px;line-height:24px;font-size:12px;color:#e2e2e2;right:706px;transform-origin:100% 50%;transform:scaleX(1.0070);">比率(S) :</span>
<div class="b" style="left:1226px;top:484px;width:109px;height:3px;background:#6c6c6c;border-radius:1px;"></div>
<svg class="b" style="left:1327px;top:485px;" width="14" height="11" viewBox="0 0 14 11"><path d="M7 0.4 L12.3 6.6 C13.4 8.4 13 10.6 10.8 10.6 H3.2 C1 10.6 0.6 8.4 1.7 6.6 Z" fill="#ffffff" stroke="#3a3a3a" stroke-width="0.6"/></svg>
<div class="b" style="left:1350px;top:478px;width:41px;height:21px;background:#454545;border:1px solid #1473e6;border-radius:2px;"></div>
<span class="t" id="t96" style="top:477px;height:24px;line-height:24px;font-size:12px;color:#f0f0f0;left:1354px;transform-origin:0 50%;transform:scaleX(0.8487);">150</span>
<div class="b" style="left:1372px;top:482px;width:1px;height:13px;background:#f0f0f0;"></div>
<span class="t" id="t97" style="top:477.5px;height:24px;line-height:24px;font-size:12px;color:#e2e2e2;left:1394px;transform-origin:0 50%;transform:scaleX(0.9370);">%</span>
<span class="t" id="t98" style="top:502px;height:24px;line-height:24px;font-size:12px;color:#e2e2e2;right:706px;transform-origin:100% 50%;transform:scaleX(1.0107);">方法 :</span>
<div class="b" style="left:1220px;top:504px;width:70px;height:22px;background:#454545;border:1px solid #636363;border-radius:3px;"></div>
<svg class="b" style="left:1277.5px;top:513.5px;" width="8" height="5" viewBox="0 0 8 5"><path d="M0.5 0.5 L4 4 L7.5 0.5" fill="none" stroke="#d0d0d0" stroke-width="1.1"/></svg>
<span class="t" id="t99" style="top:503.5px;height:24px;line-height:24px;font-size:12px;color:#e6e6e6;left:1229px;transform-origin:0 50%;transform:scaleX(0.9718);">知覚的</span>
<div class="b" style="left:1201px;top:537px;width:104px;height:24px;background:#474747;border:1px solid #616161;border-radius:3px;"></div>
<span class="t" id="t100" style="top:537.5px;height:24px;line-height:24px;font-size:12px;color:#f0f0f0;left:1213px;transform-origin:0 50%;transform:scaleX(0.9391);">初期設定にする</span>
<div class="b" style="left:1315px;top:537px;width:106px;height:24px;background:#474747;border:1px solid #616161;border-radius:3px;"></div>
<span class="t" id="t101" style="top:537.5px;height:24px;line-height:24px;font-size:12px;color:#f0f0f0;left:1327px;transform-origin:0 50%;transform:scaleX(0.9760);">初期設定に戻す</span>
<div class="b" style="left:1530px;top:304px;width:134px;height:26px;border:2px solid #c4c4c4;border-radius:13px;"></div>
<span class="t" id="t102" style="top:305.5px;height:24px;line-height:24px;font-size:12px;color:#f0f0f0;left:1597px;transform-origin:50% 50%;margin-left:-300px;width:600px;text-align:center;transform:scaleX(0.9802);">OK</span>
<div class="b" style="left:1530px;top:338px;width:134px;height:26px;border:1px solid #707070;border-radius:13px;"></div>
<span class="t" id="t103" style="top:339.5px;height:24px;line-height:24px;font-size:12px;color:#f0f0f0;left:1597px;transform-origin:50% 50%;margin-left:-300px;width:600px;text-align:center;transform:scaleX(0.8831);">キャンセル</span>
<div class="b" style="left:1530px;top:372px;width:134px;height:26px;border:1px solid #707070;border-radius:13px;"></div>
<span class="t" id="t104" style="top:373.5px;height:24px;line-height:24px;font-size:12px;color:#f0f0f0;left:1597px;transform-origin:50% 50%;margin-left:-300px;width:600px;text-align:center;transform:scaleX(0.9869);">新規スタイル(W)...</span>
<div class="b" style="left:1545px;top:410px;width:12px;height:12px;background:#dcdcdc;border-radius:2px;"></div>
<svg class="b" style="left:1545px;top:410px;" width="12" height="12" viewBox="0 0 12 12"><path d="M2.6 6.2 L5 8.6 L9.6 3.4" fill="none" stroke="#2a2a2a" stroke-width="1.9"/></svg>
<span class="t" id="t105" style="top:404.5px;height:24px;line-height:24px;font-size:12px;color:#e2e2e2;left:1564px;transform-origin:0 50%;transform:scaleX(0.8684);">プレビュー(V)</span>
<div class="b" style="left:1532px;top:434px;width:130px;height:129px;background:#2d2d2d;border:1px solid #3c3c3c;"></div>
<div class="b" style="left:1565px;top:467px;width:64px;height:64px;background:linear-gradient(#fef45a,#ffc81e);"></div>
<svg class="b" style="left:0px;top:0px;pointer-events:none;" width="1920" height="1032" viewBox="0 0 1920 1032"><g fill="none" stroke="#ff0000" stroke-width="2.2" stroke-linejoin="miter"><path d="M1080.5 257 L1112 379.5 L1224 390.5"/><path d="M1444.7 257 V376.5 L1324 389.5"/><path d="M1768 635 L1830 668.5"/></g></svg>
<div class="b" style="left:947px;top:202px;width:212px;height:56px;background:#000000;border:3px solid #ff0000;border-radius:2px;"></div>
<span class="t" id="t106" style="top:219px;height:24px;line-height:24px;font-size:43px;color:#ff0000;left:1052.5px;transform-origin:50% 50%;margin-left:-300px;width:600px;text-align:center;font-family:'Liberation Sans',sans-serif;height:60px;line-height:60px;top:201px;-webkit-text-stroke:0.4px #ff0000;transform:scaleX(1.0091);">#ffb907</span>
<div class="b" style="left:1340px;top:202px;width:212px;height:56px;background:#000000;border:3px solid #ff0000;border-radius:2px;"></div>
<span class="t" id="t107" style="top:219px;height:24px;line-height:24px;font-size:43px;color:#ff0000;left:1446.5px;transform-origin:50% 50%;margin-left:-300px;width:600px;text-align:center;font-family:'Liberation Sans',sans-serif;height:60px;line-height:60px;top:201px;-webkit-text-stroke:0.4px #ff0000;transform:scaleX(0.9932);">#fef85a</span>
<div class="b" style="left:1133px;top:324px;width:347px;height:209px;border:3px solid #ff0000;border-radius:2px;"></div>
<div class="b" style="left:1223px;top:388px;width:20px;height:20px;border:3px solid #ff0000;border-radius:2px;"></div>
<div class="b" style="left:1306px;top:388px;width:20px;height:20px;border:3px solid #ff0000;border-radius:2px;"></div>
<div class="b" style="left:856px;top:559px;width:234px;height:40px;border:3px solid #ff0000;border-radius:2px;"></div>
<div class="b" style="left:1541px;top:575px;width:276px;height:61px;background:#000000;border:3px solid #ff0000;border-radius:2px;"></div>
<span class="t" id="t108" style="top:593.5px;height:24px;line-height:24px;font-size:44px;color:#ff0000;left:1554.5px;transform-origin:0 50%;height:60px;line-height:60px;top:578.5px;transform:scaleX(0.8117);">ダブルクリック</span>
<div class="b" style="left:1662px;top:667px;width:255px;height:42px;border:3px solid #ff0000;border-radius:2px;"></div>
</body></html>
